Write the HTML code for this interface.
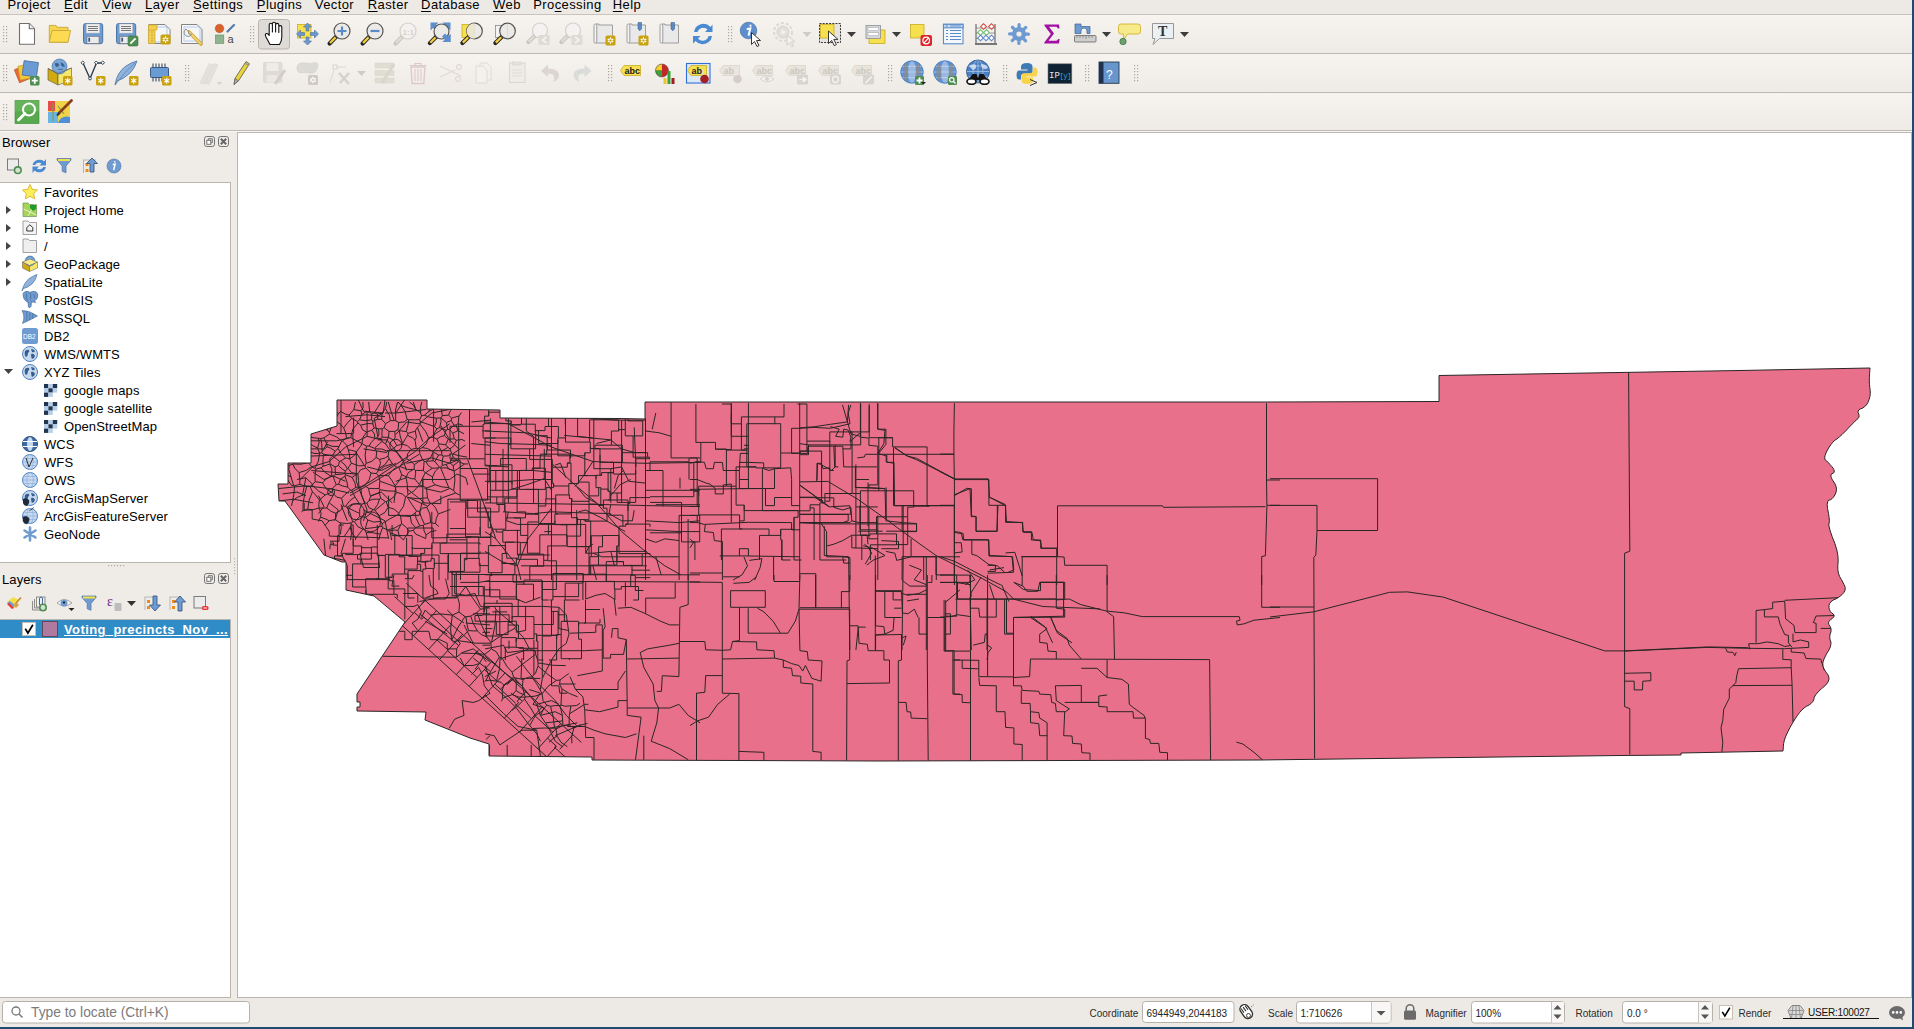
<!DOCTYPE html><html><head><meta charset="utf-8"><style>
html,body{margin:0;padding:0;width:1914px;height:1029px;overflow:hidden;background:#efebe7;position:relative;font-family:"Liberation Sans",sans-serif}
.t{position:absolute;white-space:pre;line-height:normal;font-family:"Liberation Sans",sans-serif}
svg{display:block}
</style></head><body>
<div style="position:absolute;left:0px;top:0px;width:1914px;height:14px;background:#edeae6"></div>
<div style="position:absolute;left:0px;top:14px;width:1912px;height:1px;background:#c8c3bd"></div>
<div class="t" style="left:7.5px;top:-3px;font-size:13px;color:#000;font-weight:normal;letter-spacing:0.4px">Pro<u style="text-decoration-thickness:1px;text-underline-offset:1.5px;text-decoration-skip-ink:none">j</u>ect</div>
<div class="t" style="left:64.1px;top:-3px;font-size:13px;color:#000;font-weight:normal;letter-spacing:0.4px"><u style="text-decoration-thickness:1px;text-underline-offset:1.5px;text-decoration-skip-ink:none">E</u>dit</div>
<div class="t" style="left:102.2px;top:-3px;font-size:13px;color:#000;font-weight:normal;letter-spacing:0.4px"><u style="text-decoration-thickness:1px;text-underline-offset:1.5px;text-decoration-skip-ink:none">V</u>iew</div>
<div class="t" style="left:145.1px;top:-3px;font-size:13px;color:#000;font-weight:normal;letter-spacing:0.4px"><u style="text-decoration-thickness:1px;text-underline-offset:1.5px;text-decoration-skip-ink:none">L</u>ayer</div>
<div class="t" style="left:193px;top:-3px;font-size:13px;color:#000;font-weight:normal;letter-spacing:0.4px"><u style="text-decoration-thickness:1px;text-underline-offset:1.5px;text-decoration-skip-ink:none">S</u>ettings</div>
<div class="t" style="left:256.8px;top:-3px;font-size:13px;color:#000;font-weight:normal;letter-spacing:0.4px"><u style="text-decoration-thickness:1px;text-underline-offset:1.5px;text-decoration-skip-ink:none">P</u>lugins</div>
<div class="t" style="left:314.8px;top:-3px;font-size:13px;color:#000;font-weight:normal;letter-spacing:0.4px">Vect<u style="text-decoration-thickness:1px;text-underline-offset:1.5px;text-decoration-skip-ink:none">o</u>r</div>
<div class="t" style="left:367.8px;top:-3px;font-size:13px;color:#000;font-weight:normal;letter-spacing:0.4px"><u style="text-decoration-thickness:1px;text-underline-offset:1.5px;text-decoration-skip-ink:none">R</u>aster</div>
<div class="t" style="left:421.1px;top:-3px;font-size:13px;color:#000;font-weight:normal;letter-spacing:0.4px"><u style="text-decoration-thickness:1px;text-underline-offset:1.5px;text-decoration-skip-ink:none">D</u>atabase</div>
<div class="t" style="left:493.1px;top:-3px;font-size:13px;color:#000;font-weight:normal;letter-spacing:0.4px"><u style="text-decoration-thickness:1px;text-underline-offset:1.5px;text-decoration-skip-ink:none">W</u>eb</div>
<div class="t" style="left:533.2px;top:-3px;font-size:13px;color:#000;font-weight:normal;letter-spacing:0.4px">Pro<u style="text-decoration-thickness:1px;text-underline-offset:1.5px;text-decoration-skip-ink:none">c</u>essing</div>
<div class="t" style="left:612.8px;top:-3px;font-size:13px;color:#000;font-weight:normal;letter-spacing:0.4px"><u style="text-decoration-thickness:1px;text-underline-offset:1.5px;text-decoration-skip-ink:none">H</u>elp</div>
<div style="position:absolute;left:0px;top:15px;width:1912px;height:38px;background:linear-gradient(#f7f4f0,#eeeae5)"></div>
<div style="position:absolute;left:0px;top:53px;width:1912px;height:1px;background:#bdb8b2"></div>
<div style="position:absolute;left:0px;top:54px;width:1912px;height:38px;background:linear-gradient(#f7f4f0,#eeeae5)"></div>
<div style="position:absolute;left:0px;top:92px;width:1912px;height:1px;background:#bdb8b2"></div>
<div style="position:absolute;left:0px;top:93px;width:1912px;height:37px;background:linear-gradient(#f7f4f0,#eeeae5)"></div>
<div style="position:absolute;left:0px;top:130px;width:1912px;height:1px;background:#bdb8b2"></div>
<div style="position:absolute;left:0px;top:131px;width:1912px;height:1px;background:#f9f8f6"></div>
<svg style="position:absolute;left:0;top:0" width="1914" height="135"><rect x="3" y="26" width="1.2" height="1.2" fill="#aca69f"/><rect x="6" y="26" width="1.2" height="1.2" fill="#aca69f"/><rect x="3" y="29" width="1.2" height="1.2" fill="#aca69f"/><rect x="6" y="29" width="1.2" height="1.2" fill="#aca69f"/><rect x="3" y="32" width="1.2" height="1.2" fill="#aca69f"/><rect x="6" y="32" width="1.2" height="1.2" fill="#aca69f"/><rect x="3" y="35" width="1.2" height="1.2" fill="#aca69f"/><rect x="6" y="35" width="1.2" height="1.2" fill="#aca69f"/><rect x="3" y="38" width="1.2" height="1.2" fill="#aca69f"/><rect x="6" y="38" width="1.2" height="1.2" fill="#aca69f"/><rect x="3" y="41" width="1.2" height="1.2" fill="#aca69f"/><rect x="6" y="41" width="1.2" height="1.2" fill="#aca69f"/><rect x="250" y="26" width="1.2" height="1.2" fill="#aca69f"/><rect x="253" y="26" width="1.2" height="1.2" fill="#aca69f"/><rect x="250" y="29" width="1.2" height="1.2" fill="#aca69f"/><rect x="253" y="29" width="1.2" height="1.2" fill="#aca69f"/><rect x="250" y="32" width="1.2" height="1.2" fill="#aca69f"/><rect x="253" y="32" width="1.2" height="1.2" fill="#aca69f"/><rect x="250" y="35" width="1.2" height="1.2" fill="#aca69f"/><rect x="253" y="35" width="1.2" height="1.2" fill="#aca69f"/><rect x="250" y="38" width="1.2" height="1.2" fill="#aca69f"/><rect x="253" y="38" width="1.2" height="1.2" fill="#aca69f"/><rect x="250" y="41" width="1.2" height="1.2" fill="#aca69f"/><rect x="253" y="41" width="1.2" height="1.2" fill="#aca69f"/><rect x="728" y="26" width="1.2" height="1.2" fill="#aca69f"/><rect x="731" y="26" width="1.2" height="1.2" fill="#aca69f"/><rect x="728" y="29" width="1.2" height="1.2" fill="#aca69f"/><rect x="731" y="29" width="1.2" height="1.2" fill="#aca69f"/><rect x="728" y="32" width="1.2" height="1.2" fill="#aca69f"/><rect x="731" y="32" width="1.2" height="1.2" fill="#aca69f"/><rect x="728" y="35" width="1.2" height="1.2" fill="#aca69f"/><rect x="731" y="35" width="1.2" height="1.2" fill="#aca69f"/><rect x="728" y="38" width="1.2" height="1.2" fill="#aca69f"/><rect x="731" y="38" width="1.2" height="1.2" fill="#aca69f"/><rect x="728" y="41" width="1.2" height="1.2" fill="#aca69f"/><rect x="731" y="41" width="1.2" height="1.2" fill="#aca69f"/><rect x="3" y="65" width="1.2" height="1.2" fill="#aca69f"/><rect x="6" y="65" width="1.2" height="1.2" fill="#aca69f"/><rect x="3" y="68" width="1.2" height="1.2" fill="#aca69f"/><rect x="6" y="68" width="1.2" height="1.2" fill="#aca69f"/><rect x="3" y="71" width="1.2" height="1.2" fill="#aca69f"/><rect x="6" y="71" width="1.2" height="1.2" fill="#aca69f"/><rect x="3" y="74" width="1.2" height="1.2" fill="#aca69f"/><rect x="6" y="74" width="1.2" height="1.2" fill="#aca69f"/><rect x="3" y="77" width="1.2" height="1.2" fill="#aca69f"/><rect x="6" y="77" width="1.2" height="1.2" fill="#aca69f"/><rect x="3" y="80" width="1.2" height="1.2" fill="#aca69f"/><rect x="6" y="80" width="1.2" height="1.2" fill="#aca69f"/><rect x="185" y="65" width="1.2" height="1.2" fill="#aca69f"/><rect x="188" y="65" width="1.2" height="1.2" fill="#aca69f"/><rect x="185" y="68" width="1.2" height="1.2" fill="#aca69f"/><rect x="188" y="68" width="1.2" height="1.2" fill="#aca69f"/><rect x="185" y="71" width="1.2" height="1.2" fill="#aca69f"/><rect x="188" y="71" width="1.2" height="1.2" fill="#aca69f"/><rect x="185" y="74" width="1.2" height="1.2" fill="#aca69f"/><rect x="188" y="74" width="1.2" height="1.2" fill="#aca69f"/><rect x="185" y="77" width="1.2" height="1.2" fill="#aca69f"/><rect x="188" y="77" width="1.2" height="1.2" fill="#aca69f"/><rect x="185" y="80" width="1.2" height="1.2" fill="#aca69f"/><rect x="188" y="80" width="1.2" height="1.2" fill="#aca69f"/><rect x="608" y="65" width="1.2" height="1.2" fill="#aca69f"/><rect x="611" y="65" width="1.2" height="1.2" fill="#aca69f"/><rect x="608" y="68" width="1.2" height="1.2" fill="#aca69f"/><rect x="611" y="68" width="1.2" height="1.2" fill="#aca69f"/><rect x="608" y="71" width="1.2" height="1.2" fill="#aca69f"/><rect x="611" y="71" width="1.2" height="1.2" fill="#aca69f"/><rect x="608" y="74" width="1.2" height="1.2" fill="#aca69f"/><rect x="611" y="74" width="1.2" height="1.2" fill="#aca69f"/><rect x="608" y="77" width="1.2" height="1.2" fill="#aca69f"/><rect x="611" y="77" width="1.2" height="1.2" fill="#aca69f"/><rect x="608" y="80" width="1.2" height="1.2" fill="#aca69f"/><rect x="611" y="80" width="1.2" height="1.2" fill="#aca69f"/><rect x="888" y="65" width="1.2" height="1.2" fill="#aca69f"/><rect x="891" y="65" width="1.2" height="1.2" fill="#aca69f"/><rect x="888" y="68" width="1.2" height="1.2" fill="#aca69f"/><rect x="891" y="68" width="1.2" height="1.2" fill="#aca69f"/><rect x="888" y="71" width="1.2" height="1.2" fill="#aca69f"/><rect x="891" y="71" width="1.2" height="1.2" fill="#aca69f"/><rect x="888" y="74" width="1.2" height="1.2" fill="#aca69f"/><rect x="891" y="74" width="1.2" height="1.2" fill="#aca69f"/><rect x="888" y="77" width="1.2" height="1.2" fill="#aca69f"/><rect x="891" y="77" width="1.2" height="1.2" fill="#aca69f"/><rect x="888" y="80" width="1.2" height="1.2" fill="#aca69f"/><rect x="891" y="80" width="1.2" height="1.2" fill="#aca69f"/><rect x="1003" y="65" width="1.2" height="1.2" fill="#aca69f"/><rect x="1006" y="65" width="1.2" height="1.2" fill="#aca69f"/><rect x="1003" y="68" width="1.2" height="1.2" fill="#aca69f"/><rect x="1006" y="68" width="1.2" height="1.2" fill="#aca69f"/><rect x="1003" y="71" width="1.2" height="1.2" fill="#aca69f"/><rect x="1006" y="71" width="1.2" height="1.2" fill="#aca69f"/><rect x="1003" y="74" width="1.2" height="1.2" fill="#aca69f"/><rect x="1006" y="74" width="1.2" height="1.2" fill="#aca69f"/><rect x="1003" y="77" width="1.2" height="1.2" fill="#aca69f"/><rect x="1006" y="77" width="1.2" height="1.2" fill="#aca69f"/><rect x="1003" y="80" width="1.2" height="1.2" fill="#aca69f"/><rect x="1006" y="80" width="1.2" height="1.2" fill="#aca69f"/><rect x="1085" y="65" width="1.2" height="1.2" fill="#aca69f"/><rect x="1088" y="65" width="1.2" height="1.2" fill="#aca69f"/><rect x="1085" y="68" width="1.2" height="1.2" fill="#aca69f"/><rect x="1088" y="68" width="1.2" height="1.2" fill="#aca69f"/><rect x="1085" y="71" width="1.2" height="1.2" fill="#aca69f"/><rect x="1088" y="71" width="1.2" height="1.2" fill="#aca69f"/><rect x="1085" y="74" width="1.2" height="1.2" fill="#aca69f"/><rect x="1088" y="74" width="1.2" height="1.2" fill="#aca69f"/><rect x="1085" y="77" width="1.2" height="1.2" fill="#aca69f"/><rect x="1088" y="77" width="1.2" height="1.2" fill="#aca69f"/><rect x="1085" y="80" width="1.2" height="1.2" fill="#aca69f"/><rect x="1088" y="80" width="1.2" height="1.2" fill="#aca69f"/><rect x="1134" y="65" width="1.2" height="1.2" fill="#aca69f"/><rect x="1137" y="65" width="1.2" height="1.2" fill="#aca69f"/><rect x="1134" y="68" width="1.2" height="1.2" fill="#aca69f"/><rect x="1137" y="68" width="1.2" height="1.2" fill="#aca69f"/><rect x="1134" y="71" width="1.2" height="1.2" fill="#aca69f"/><rect x="1137" y="71" width="1.2" height="1.2" fill="#aca69f"/><rect x="1134" y="74" width="1.2" height="1.2" fill="#aca69f"/><rect x="1137" y="74" width="1.2" height="1.2" fill="#aca69f"/><rect x="1134" y="77" width="1.2" height="1.2" fill="#aca69f"/><rect x="1137" y="77" width="1.2" height="1.2" fill="#aca69f"/><rect x="1134" y="80" width="1.2" height="1.2" fill="#aca69f"/><rect x="1137" y="80" width="1.2" height="1.2" fill="#aca69f"/><rect x="3" y="104" width="1.2" height="1.2" fill="#aca69f"/><rect x="6" y="104" width="1.2" height="1.2" fill="#aca69f"/><rect x="3" y="107" width="1.2" height="1.2" fill="#aca69f"/><rect x="6" y="107" width="1.2" height="1.2" fill="#aca69f"/><rect x="3" y="110" width="1.2" height="1.2" fill="#aca69f"/><rect x="6" y="110" width="1.2" height="1.2" fill="#aca69f"/><rect x="3" y="113" width="1.2" height="1.2" fill="#aca69f"/><rect x="6" y="113" width="1.2" height="1.2" fill="#aca69f"/><rect x="3" y="116" width="1.2" height="1.2" fill="#aca69f"/><rect x="6" y="116" width="1.2" height="1.2" fill="#aca69f"/><rect x="3" y="119" width="1.2" height="1.2" fill="#aca69f"/><rect x="6" y="119" width="1.2" height="1.2" fill="#aca69f"/><path d="M19.5 23.5 H29.3 L34.5 28.7 V44.2 H19.5 Z" fill="#fff" stroke="#6f6f6f" stroke-width="1.1" stroke-linejoin="round"/><path d="M29.3 23.5 V28.7 H34.5" fill="#eee" stroke="#6f6f6f" stroke-width="1.1"/><path d="M49.3 42.2 V25.4 H56 L57 27.3 H68 V42.2 Z" fill="#f6d44e" stroke="#c7a73a" stroke-width="0.9"/><path d="M49.3 42.2 L52 30.5 H70.6 L68 42.2 Z" fill="#fcda52" stroke="#c7a73a" stroke-width="0.9"/><rect x="83.5" y="23.5" width="19.2" height="20.2" rx="2.2" fill="#6f9cd0" stroke="#4d74a6" stroke-width="1"/><rect x="86.5" y="24" width="13" height="9" fill="#f0f0f0" stroke="#c9c9c9" stroke-width="0.6"/><path d="M88 26.5 h10 M88 28.5 h10 M88 30.5 h10" stroke="#555" stroke-width="0.8"/><rect x="87" y="36.5" width="12" height="6.8" fill="#ececec" stroke="#777" stroke-width="0.6"/><rect x="88.3" y="37.7" width="1.8" height="4" fill="#3a5a80"/><rect x="116.5" y="23.5" width="19.2" height="20.2" rx="2.2" fill="#6f9cd0" stroke="#4d74a6" stroke-width="1"/><rect x="119.5" y="24" width="13" height="9" fill="#f0f0f0" stroke="#c9c9c9" stroke-width="0.6"/><path d="M121 26.5 h10 M121 28.5 h10 M121 30.5 h10" stroke="#555" stroke-width="0.8"/><rect x="120" y="36.5" width="12" height="6.8" fill="#ececec" stroke="#777" stroke-width="0.6"/><rect x="121.3" y="37.7" width="1.8" height="4" fill="#3a5a80"/><rect x="128" y="36" width="10" height="10" rx="1.5" fill="#4f8d52" stroke="#3f7342" stroke-width="0.6"/><path d="M130.3 43.6 L135.6 38.3" stroke="#fff" stroke-width="1.8"/><path d="M149 24.5 H165 L170 29.5 V43.5 H149 Z" fill="#f6f6f6" stroke="#777" stroke-width="0.9"/><rect x="152" y="27" width="15" height="15" fill="none" stroke="#9ec0ec" stroke-width="0.8"/><path d="M148.5 25 H155 V43.5 H148.5 Z" fill="#f2cf4a" stroke="#c9a53a" stroke-width="0.7"/><path d="M148.5 25 H157 V30 H148.5Z" fill="#f2cf4a" stroke="#c9a53a" stroke-width="0.7"/><path d="M151 32 h2 M151 35 h2 M151 38 h2 M151 41 h2" stroke="#a8892a" stroke-width="0.6"/><rect x="160.5" y="34.5" width="10" height="10" rx="1.5" fill="#c9a20e"/><g stroke="#fff" stroke-width="1.1"><path d="M165.5 36.3 v6.4 M162.7 37.9 l5.6 3.2 M162.7 41.1 l5.6 -3.2"/></g><circle cx="165.5" cy="39.5" r="1.6" fill="#c9a20e" stroke="#fff" stroke-width="0.9"/><path d="M181.5 24.5 H197 L202 29.5 V43.5 H181.5 Z" fill="#f6f6f6" stroke="#777" stroke-width="0.9"/><rect x="184" y="27" width="16" height="14" fill="none" stroke="#a9c6ee" stroke-width="0.8"/><path d="M189 32 L201 44" stroke="#c9a53a" stroke-width="3.6" stroke-linecap="round"/><path d="M189.5 32.5 L200.5 43.5" stroke="#f0d06a" stroke-width="2.2" stroke-linecap="round"/><path d="M186 29 a4 4 0 1 0 5.5 5.5 l-2.5 -0.5 l-0.8 -2.5 l-2.2 -2.5 z" fill="#f0f0f0" stroke="#777" stroke-width="0.8"/><circle cx="219.5" cy="28.5" r="4.3" fill="#d9622b" stroke="#b04c1f" stroke-width="0.5"/><path d="M227.5 31.5 L234 25" stroke="#4f7bb0" stroke-width="2.2" stroke-linecap="round"/><rect x="215.5" y="35" width="8.3" height="8.3" fill="#8fb38f" stroke="#5e8a5e" stroke-width="0.6"/><text x="227.5" y="43" font-family="Liberation Sans" font-size="11" fill="#444">a</text><rect x="258.5" y="19.5" width="31" height="29.5" rx="3" fill="#dedad5" stroke="#b9b4ad" stroke-width="1"/><path d="M270 44.5 L266 37 Q264.5 34 266.5 33.5 Q268 33.3 269.2 35.5 V25 Q269.2 23.2 270.8 23.2 Q272.4 23.2 272.4 25 V32 V24 Q272.4 22.2 274 22.2 Q275.6 22.2 275.6 24 V32 V25 Q275.6 23.4 277.2 23.4 Q278.8 23.4 278.8 25 V32.5 V27 Q278.8 25.6 280.3 25.6 Q281.8 25.6 281.8 27 V37 Q281.8 41 279.5 44.5 Z" fill="#fff" stroke="#111" stroke-width="1.1" stroke-linejoin="round"/><rect x="297.5" y="24.5" width="13.5" height="13.5" fill="#f7e04d" stroke="#c9ad27" stroke-width="0.8"/><g fill="#6d9ad0" stroke="#44699c" stroke-width="0.6"><path d="M307.5 23 l-4 4 h2.6 v4 h2.8 v-4 h2.6 z"/><path d="M307.5 45 l-4 -4 h2.6 v-4 h2.8 v4 h2.6 z"/><path d="M296.5 34 l4 -4 v2.6 h4 v2.8 h-4 v2.6 z"/><path d="M318.5 34 l-4 -4 v2.6 h-4 v2.8 h4 v2.6 z"/></g><path d="M336.4 36.6 L329.6 43.4" stroke="#222" stroke-width="4.2" stroke-linecap="round"/><path d="M335.6 37.4 L330.0 43.0" stroke="#f2cd3c" stroke-width="2.4" stroke-linecap="butt"/><circle cx="342" cy="31" r="8" fill="#eceae6" stroke="#555" stroke-width="1.2"/><path d="M337.5 31 h9 M342 26.5 v9" stroke="#5b8bc8" stroke-width="2.2"/><path d="M369.4 36.6 L362.6 43.4" stroke="#222" stroke-width="4.2" stroke-linecap="round"/><path d="M368.6 37.4 L363.0 43.0" stroke="#f2cd3c" stroke-width="2.4" stroke-linecap="butt"/><circle cx="375" cy="31" r="8" fill="#eceae6" stroke="#555" stroke-width="1.2"/><path d="M370.5 31 h9" stroke="#5b8bc8" stroke-width="2.2"/><path d="M402.4 36.6 L395.6 43.4" stroke="#c8c4be" stroke-width="4.2" stroke-linecap="round"/><path d="M401.6 37.4 L396.0 43.0" stroke="#e0dcd6" stroke-width="2.4" stroke-linecap="butt"/><circle cx="408" cy="31" r="8" fill="#f4f2f0" stroke="#d4d0cb" stroke-width="1.2"/><text x="402.5" y="34.5" font-family="Liberation Sans" font-size="8" font-weight="bold" fill="#d6d2cd">1:1</text><g fill="#5d8fcd"><path d="M430.5 22.5 h8 l-2.5 2.5 l3 3 l-3 3 l-3 -3 l-2.5 2.5 z"/><path d="M450.5 22.5 v8 l-2.5 -2.5 l-3 3 l-3 -3 l3 -3 l-2.5 -2.5 z"/><path d="M450.5 42 h-8 l2.5 -2.5 l-3 -3 l3 -3 l3 3 l2.5 -2.5 z"/></g><path d="M436.25 36.75 L429.875 43.125" stroke="#222" stroke-width="4.2" stroke-linecap="round"/><path d="M435.5 37.5 L430.25 42.75" stroke="#f2cd3c" stroke-width="2.4" stroke-linecap="butt"/><circle cx="441.5" cy="31.5" r="7.5" fill="#eceae6" stroke="#555" stroke-width="1.2"/><path d="M450.5 42 h-8 l2.5 -2.5 l-3 -3 l3 -3 l3 3 l2.5 -2.5 z" fill="#5d8fcd"/><rect x="462" y="24.5" width="11" height="13" fill="#f7e04d" stroke="#c9ad27" stroke-width="0.8"/><path d="M469.04 36.46 L462.41 43.09" stroke="#222" stroke-width="4.2" stroke-linecap="round"/><path d="M468.26 37.24 L462.8 42.7" stroke="#f2cd3c" stroke-width="2.4" stroke-linecap="butt"/><circle cx="474.5" cy="31" r="7.8" fill="#eceae6" stroke="#555" stroke-width="1.2"/><path d="M474.5 23.5 v15" stroke="#ccc" stroke-width="0.6"/><path d="M466.7 31 a7.8 7.8 0 0 0 7.8 7.8 v-15.6 a7.8 7.8 0 0 0 -7.8 7.8z" fill="#ece6cf"/><rect x="495.5" y="25.5" width="11" height="12" fill="#f3f3f3" stroke="#8a8a8a" stroke-width="0.8"/><path d="M502.04 36.46 L495.41 43.09" stroke="#222" stroke-width="4.2" stroke-linecap="round"/><path d="M501.26 37.24 L495.8 42.7" stroke="#f2cd3c" stroke-width="2.4" stroke-linecap="butt"/><circle cx="507.5" cy="31" r="7.8" fill="#eceae6" stroke="#555" stroke-width="1.2"/><path d="M507.5 23.5 v15" stroke="#ccc" stroke-width="0.6"/><path d="M534.75 35.75 L528.375 42.125" stroke="#c8c4be" stroke-width="4.2" stroke-linecap="round"/><path d="M534.0 36.5 L528.75 41.75" stroke="#e0dcd6" stroke-width="2.4" stroke-linecap="butt"/><circle cx="540" cy="30.5" r="7.5" fill="#f4f2f0" stroke="#d4d0cb" stroke-width="1.2"/><rect x="538.5" y="35" width="11" height="10" fill="#dedad5"/><path d="M546.5 37 l-4 3 l4 3" stroke="#f5f3f0" stroke-width="1.6" fill="none"/><path d="M567.75 35.75 L561.375 42.125" stroke="#c8c4be" stroke-width="4.2" stroke-linecap="round"/><path d="M567.0 36.5 L561.75 41.75" stroke="#e0dcd6" stroke-width="2.4" stroke-linecap="butt"/><circle cx="573" cy="30.5" r="7.5" fill="#f4f2f0" stroke="#d4d0cb" stroke-width="1.2"/><rect x="571.5" y="35" width="11" height="10" fill="#dedad5"/><path d="M575 37 l4 3 l-4 3" stroke="#f5f3f0" stroke-width="1.6" fill="none"/><path d="M596 24 h3 v1 h13.5 v18 h-16.5 z" fill="#e9e9e9" stroke="#8c8c8c" stroke-width="0.8"/><rect x="594" y="24" width="2.8" height="19" rx="1.4" fill="#f4f4f4" stroke="#8c8c8c" stroke-width="0.8"/><rect x="605.5" y="35.5" width="10" height="10" rx="1.5" fill="#c9a20e"/><g stroke="#fff" stroke-width="1.1"><path d="M610.5 37.3 v6.4 M607.7 38.9 l5.6 3.2 M607.7 42.1 l5.6 -3.2"/></g><circle cx="610.5" cy="40.5" r="1.6" fill="#c9a20e" stroke="#fff" stroke-width="0.9"/><path d="M629 24 h3 v1 h13.5 v18 h-16.5 z" fill="#e9e9e9" stroke="#8c8c8c" stroke-width="0.8"/><rect x="627" y="24" width="2.8" height="19" rx="1.4" fill="#f4f4f4" stroke="#8c8c8c" stroke-width="0.8"/><path d="M638 22.5 h3.5 v6.5 l-1.75 1.8 l-1.75 -1.8 z" fill="#5a8ac6" stroke="#34577f" stroke-width="0.5"/><rect x="638.5" y="35.5" width="10" height="10" rx="1.5" fill="#c9a20e"/><g stroke="#fff" stroke-width="1.1"><path d="M643.5 37.3 v6.4 M640.7 38.9 l5.6 3.2 M640.7 42.1 l5.6 -3.2"/></g><circle cx="643.5" cy="40.5" r="1.6" fill="#c9a20e" stroke="#fff" stroke-width="0.9"/><path d="M662 24 h3 v1 h13.5 v18 h-16.5 z" fill="#e9e9e9" stroke="#8c8c8c" stroke-width="0.8"/><rect x="660" y="24" width="2.8" height="19" rx="1.4" fill="#f4f4f4" stroke="#8c8c8c" stroke-width="0.8"/><path d="M671 22.5 h3.5 v6.5 l-1.75 1.8 l-1.75 -1.8 z" fill="#5a8ac6" stroke="#34577f" stroke-width="0.5"/><path d="M694 32 A9.5 9.5 0 0 1 710.5 27 L712.5 24.5 V32 H705 L707.5 29.5 A6 6 0 0 0 697.5 32 Z" fill="#4a8ad2"/><path d="M712 36 A9.5 9.5 0 0 1 695.5 41 L693 43.5 V36 H700.5 L698 38.5 A6 6 0 0 0 708.5 36 Z" fill="#4a8ad2"/><circle cx="748.5" cy="30.5" r="8.3" fill="#5e8fcc" stroke="#4672a8" stroke-width="0.7"/><path d="M747.5 29 l2.8 -0.6 l-1.6 6.5 M750.5 25.5 v0.3" stroke="#fff" stroke-width="2" stroke-linecap="round" fill="none"/><path d="M751.5 32.5 l0.0 12.0 l3.0 -3.0 l2.5 5.0 l2.0 -1.0 l-2.5 -5.0 l4.0 0 z" fill="#fff" stroke="#222" stroke-width="0.9" stroke-linejoin="round"/><circle cx="783" cy="32" r="9" fill="none" stroke="#dcd8d3" stroke-width="2" stroke-dasharray="3 2"/><circle cx="783" cy="32" r="6" fill="#e2dfdb" stroke="#d6d2cd"/><path d="M781.5 29 v6 l4.5 -3 z" fill="#f4f2ef"/><path d="M787 35 l0.0 10.2 l2.55 -2.55 l2.125 4.25 l1.7 -0.85 l-2.125 -4.25 l3.4 0 z" fill="#f4f2f0" stroke="#cfcbc6" stroke-width="0.9" stroke-linejoin="round"/><path d="M802.5 32 h9 l-4.5 5 z" fill="#cfcbc5"/><rect x="819.5" y="23.5" width="21" height="19" fill="#e6e4e1" stroke="#222" stroke-width="0.9" stroke-dasharray="2 1.2"/><rect x="820.5" y="24.5" width="13.5" height="13.5" fill="#f7e04d" stroke="#c9ad27" stroke-width="0.8"/><path d="M828.5 31 l0.0 12.600000000000001 l3.1500000000000004 -3.1500000000000004 l2.625 5.25 l2.1 -1.05 l-2.625 -5.25 l4.2 0 z" fill="#fff" stroke="#222" stroke-width="0.9" stroke-linejoin="round"/><path d="M847 32 h9 l-4.5 5 z" fill="#3c3c3c"/><rect x="869" y="30" width="16" height="13.5" fill="#f7e04d" stroke="#c9ad27" stroke-width="0.8"/><rect x="866" y="25.5" width="14.5" height="13" fill="#d4d8dc" stroke="#8b8f93" stroke-width="0.8"/><rect x="868" y="27.5" width="10.5" height="3.2" fill="#fff" stroke="#999" stroke-width="0.5"/><rect x="868" y="32.5" width="10.5" height="3.2" fill="#fff" stroke="#999" stroke-width="0.5"/><path d="M892 32 h9 l-4.5 5 z" fill="#3c3c3c"/><rect x="910.5" y="24.5" width="13.5" height="13.5" fill="#f7e04d" stroke="#c9ad27" stroke-width="0.8"/><rect x="920.5" y="35" width="11.5" height="11" rx="2" fill="#d8262c"/><circle cx="926.2" cy="40.5" r="3.3" fill="none" stroke="#fff" stroke-width="1.2"/><path d="M924 42.8 l4.5 -4.6" stroke="#fff" stroke-width="1.2"/><rect x="943.5" y="24.3" width="19.5" height="19.5" fill="#f4f8fc" stroke="#5b8ac8" stroke-width="1.1"/><rect x="943.5" y="24.3" width="19.5" height="3.5" fill="#cfe0f4" stroke="#5b8ac8" stroke-width="1.1"/><path d="M945.5 26 h2.5 M950 26 h11 M946 30.5 h2 M950 30.5 h11 M946 33.5 h2 M950 33.5 h11 M946 36.5 h2 M950 36.5 h11 M946 39.5 h2 M950 39.5 h11" stroke="#5b8ac8" stroke-width="1"/><path d="M976 24 V44 M995 24 V44" stroke="#555" stroke-width="1"/><rect x="975" y="43" width="22" height="2" fill="#777"/><path d="M976 28 h19 M976 33 h19 M976 38.5 h19" stroke="#666" stroke-width="0.6"/><rect x="981.5" y="24.5" width="4" height="4" transform="rotate(45 983.5 26.5)" fill="#fff" stroke="#d9433a" stroke-width="1"/><rect x="989.5" y="24.5" width="4" height="4" transform="rotate(45 991.5 26.5)" fill="#fff" stroke="#d9433a" stroke-width="1"/><rect x="978.5" y="30.5" width="4" height="4" transform="rotate(45 980.5 32.5)" fill="#fff" stroke="#6bbf6a" stroke-width="1"/><rect x="984.5" y="30.5" width="4" height="4" transform="rotate(45 986.5 32.5)" fill="#fff" stroke="#6bbf6a" stroke-width="1"/><rect x="978.5" y="36" width="4" height="4" transform="rotate(45 980.5 38)" fill="#fff" stroke="#5b8ac8" stroke-width="1"/><rect x="984" y="36" width="4" height="4" transform="rotate(45 986 38)" fill="#fff" stroke="#5b8ac8" stroke-width="1"/><rect x="989.5" y="36" width="4" height="4" transform="rotate(45 991.5 38)" fill="#fff" stroke="#5b8ac8" stroke-width="1"/><rect x="1017.5" y="23" width="3.2" height="6" rx="1.5" fill="#6e9ad2" transform="rotate(0 1019 34)"/><rect x="1017.5" y="23" width="3.2" height="6" rx="1.5" fill="#6e9ad2" transform="rotate(45 1019 34)"/><rect x="1017.5" y="23" width="3.2" height="6" rx="1.5" fill="#6e9ad2" transform="rotate(90 1019 34)"/><rect x="1017.5" y="23" width="3.2" height="6" rx="1.5" fill="#6e9ad2" transform="rotate(135 1019 34)"/><rect x="1017.5" y="23" width="3.2" height="6" rx="1.5" fill="#6e9ad2" transform="rotate(180 1019 34)"/><rect x="1017.5" y="23" width="3.2" height="6" rx="1.5" fill="#6e9ad2" transform="rotate(225 1019 34)"/><rect x="1017.5" y="23" width="3.2" height="6" rx="1.5" fill="#6e9ad2" transform="rotate(270 1019 34)"/><rect x="1017.5" y="23" width="3.2" height="6" rx="1.5" fill="#6e9ad2" transform="rotate(315 1019 34)"/><circle cx="1019" cy="34" r="7" fill="#6e9ad2"/><circle cx="1019" cy="34" r="2.6" fill="#f1eee9"/><path d="M1044.5 24.5 H1059 L1059.5 28.5 L1058 28.5 L1056.5 26.8 H1049 L1054 33.5 L1048.5 40.8 H1056.5 L1058.3 39 H1059.6 L1059 43.5 H1044.3 V42.5 L1050.8 34 L1044.5 25.8 Z" fill="#a10fa3"/><path d="M1075 24 h6 v2.5 h9 v7 h-3 v-2.5 q0 -3 -3 -3 q-3 0 -3 3 v2.5 h-6 z" fill="#6e9ad2" stroke="#3d6394" stroke-width="0.7"/><rect x="1074.5" y="35.5" width="21.5" height="6.5" rx="1" fill="#cfcfcf" stroke="#666" stroke-width="0.8"/><path d="M1077 35.5 v2.5 M1080 35.5 v2.5 M1083 35.5 v2.5 M1086 35.5 v3.5 M1089 35.5 v2.5 M1092 35.5 v2.5" stroke="#666" stroke-width="0.6"/><path d="M1102 32 h9 l-4.5 5 z" fill="#3c3c3c"/><path d="M1121 24 h17 a2.5 2.5 0 0 1 2.5 2.5 v5 a2.5 2.5 0 0 1 -2.5 2.5 h-10.5 l-4 6 v-6 h-2.5 a2.5 2.5 0 0 1 -2.5 -2.5 v-5 a2.5 2.5 0 0 1 2.5 -2.5 z" fill="#f7ea8a" stroke="#d3b22f" stroke-width="0.9"/><circle cx="1123" cy="41.5" r="3.2" fill="#6ca26d" stroke="#3c6e3d" stroke-width="0.7"/><path d="M1152.5 23.5 h21 v15 h-14 l-6.5 6 l2 -6 h-2.5 z" fill="#eaf0f4" stroke="#8c8c8c" stroke-width="0.9"/><text x="1158" y="36" font-family="Liberation Serif" font-size="14" font-weight="bold" fill="#333">T</text><path d="M1180 32 h9 l-4.5 5 z" fill="#3c3c3c"/><rect x="16.5" y="67" width="12" height="14" transform="rotate(-22 22.5 74)" fill="#e76b35" stroke="#b24e22" stroke-width="0.6"/><rect x="19" y="65" width="12.5" height="14" transform="rotate(-10 25 72)" fill="#f3c83c" stroke="#c29a23" stroke-width="0.6"/><rect x="23" y="61.5" width="14.5" height="14.5" transform="rotate(8 30 69)" fill="#6a9bd3" stroke="#40679a" stroke-width="0.7"/><rect x="30" y="76" width="9.5" height="9.5" rx="1.5" fill="#4f8d52"/><path d="M34.75 77.7 v6 M31.75 80.7 h6" stroke="#fff" stroke-width="1.8"/><path d="M48 68.5 L58 73.5 V85 L48 80 Z" fill="#d0aa0f" stroke="#555" stroke-width="0.6"/><path d="M58 73.5 L71.5 68 V80 L58 85 Z" fill="#f6e76a" stroke="#555" stroke-width="0.6"/><circle cx="59.5" cy="66.5" r="7.5" fill="#7aa7d8" stroke="#40679a" stroke-width="0.6"/><path d="M55 63.5 q3 -1 4 1 q-1 3 -3 2 z M61 62.5 q3 1 3.5 4 q-2 0 -3 -1 z M58 69 q3 1 5 0" fill="#3d5f8e" stroke="#3d5f8e" stroke-width="0.6"/><path d="M48 68.5 L58 73.5 L71.5 68" fill="none" stroke="#555" stroke-width="0.6"/><rect x="63" y="76" width="9.5" height="9.5" rx="1.5" fill="#caa10f"/><g stroke="#fff" stroke-width="1.1"><path d="M67.75 77.8 v6 M65.2 79.3 l5.1 3 M65.2 82.3 l5.1 -3"/></g><path d="M83 63 L90 78.5 L96.5 63 H103.5" fill="none" stroke="#283a4f" stroke-width="1.3"/><g fill="#fff" stroke="#283a4f" stroke-width="0.9"><rect x="81.5" y="61.5" width="2.5" height="2.5" transform="rotate(45 82.75 62.75)"/><rect x="95" y="61.5" width="2.5" height="2.5" transform="rotate(45 96.25 62.75)"/><rect x="101.5" y="61.5" width="2.5" height="2.5" transform="rotate(45 102.75 62.75)"/><circle cx="90" cy="78.5" r="1.4"/></g><rect x="96" y="76" width="9.5" height="9.5" rx="1.5" fill="#caa10f"/><g stroke="#fff" stroke-width="1.1"><path d="M100.75 77.8 v6 M98.2 79.3 l5.1 3 M98.2 82.3 l5.1 -3"/></g><path d="M115 85 Q117 72 126 66 Q132 62 137 61 Q135 68 130 73 Q124 79 117 81 Z" fill="#8fb3dc" stroke="#4d73a2" stroke-width="0.8"/><path d="M116 84 Q124 72 135 63" stroke="#4d73a2" stroke-width="0.6" fill="none"/><rect x="129" y="76" width="9.5" height="9.5" rx="1.5" fill="#caa10f"/><g stroke="#fff" stroke-width="1.1"><path d="M133.75 77.8 v6 M131.2 79.3 l5.1 3 M131.2 82.3 l5.1 -3"/></g><path d="M153 63.5 v4 M156 63.5 v4 M159 63.5 v4 M162 63.5 v4 M165 63.5 v4 M153 77 v4.5 M156 77 v4.5 M159 77 v4.5 M162 77 v4.5" stroke="#283a4f" stroke-width="1"/><rect x="150.5" y="67.5" width="18" height="10" rx="1" fill="#6a9bd3" stroke="#2f4f7a" stroke-width="0.9"/><rect x="162" y="76" width="9.5" height="9.5" rx="1.5" fill="#caa10f"/><g stroke="#fff" stroke-width="1.1"><path d="M166.75 77.8 v6 M164.2 79.3 l5.1 3 M164.2 82.3 l5.1 -3"/></g><path d="M200 83 L209 63.5 L213 65 L204 84.5 Z M205 83 L214 63.5 L218 65 L209 84.5 Z" fill="#e4e0dc" stroke="#dcd8d3" stroke-width="0.6"/><path d="M217 82 h5 l-2.5 3 z" fill="#d3cfca"/><path d="M234 84.5 L235 78.5 L246 61.5 L249.5 63.8 L238.5 80.8 Z" fill="#e9d43a" stroke="#555" stroke-width="0.8"/><path d="M234 84.5 L235 78.5 L238.5 80.8 Z" fill="#aaa" stroke="#555" stroke-width="0.6"/><path d="M245 63 L248.5 65.3" stroke="#999" stroke-width="1.6"/><rect x="263" y="62" width="19.5" height="21" rx="2" fill="#dedad5"/><rect x="266.5" y="63" width="12" height="8" fill="#efece8"/><rect x="266.5" y="75" width="11" height="7.5" fill="#ebe8e4"/><path d="M275 84 L285 70" stroke="#d2cdc7" stroke-width="3"/><path d="M297 67 Q298 62 305 63 Q312 64 316 62.5 Q319 64 317 69 Q315 74 310 73 Q305 72 300 73 Q296 71 297 67 Z" fill="#dcdad4" stroke="#d2cfca" stroke-width="0.6"/><rect x="308" y="75" width="10" height="10" rx="1.5" fill="#cfcac3"/><g stroke="#fff" stroke-width="1.1"><path d="M313 76.8 v6.4 M310.2 78.4 l5.6 3.2 M310.2 81.6 l5.6 -3.2"/></g><circle cx="313" cy="80" r="1.6" fill="#cfcac3" stroke="#fff" stroke-width="0.9"/><rect x="333" y="65" width="4" height="4" fill="none" stroke="#cfcbc5" stroke-width="0.8"/><path d="M337 67 h9 M334 70 L330 83" stroke="#d6d2cd" stroke-width="0.8"/><path d="M339 73 L349 84 M349 73 L340 83" stroke="#d5d1cb" stroke-width="2.5"/><path d="M357 71 h9 l-4.5 5 z" fill="#cfcbc5"/><rect x="375" y="63" width="19" height="5" fill="#e0ddd2" stroke="#d6d3ca" stroke-width="0.5"/><rect x="375" y="70.5" width="19" height="5" fill="#e0ddd2" stroke="#d6d3ca" stroke-width="0.5"/><rect x="375" y="78" width="19" height="5" fill="#e0ddd2" stroke="#d6d3ca" stroke-width="0.5"/><path d="M382 83 L394 64" stroke="#d9d5cf" stroke-width="3"/><path d="M409.5 65.5 h17 M415 65.5 v-2 h6 v2" stroke="#ddc9c9" stroke-width="1.2" fill="none"/><path d="M411 67 h14 l-1.2 16.5 h-11.6 z" fill="none" stroke="#ddc9c9" stroke-width="1.4"/><path d="M415 69 v12 M418 69 v12 M421 69 v12" stroke="#ddc9c9" stroke-width="1.1"/><path d="M440 66 L461 76 M440 77 L455 70" stroke="#ddd9d3" stroke-width="1.2"/><circle cx="458" cy="79" r="2.5" fill="none" stroke="#e0cfd0" stroke-width="1"/><circle cx="459" cy="67" r="2.5" fill="none" stroke="#e0cfd0" stroke-width="1"/><path d="M480 63 h7 l4 4 v13 h-11 z" fill="#f3f1ee" stroke="#dcd8d2" stroke-width="0.9"/><path d="M476 66 h7 l4 4 v13 h-11 z" fill="#f3f1ee" stroke="#dcd8d2" stroke-width="0.9"/><rect x="509.5" y="63" width="15.5" height="19.5" fill="#efece8" stroke="#d9d5cf" stroke-width="1"/><rect x="512.5" y="62" width="9" height="3" fill="#e5e1dc" stroke="#d9d5cf" stroke-width="0.7"/><path d="M512 70 h10 M512 73 h10 M512 76 h10" stroke="#dcd8d2" stroke-width="0.8"/><path d="M548 64.5 L541 71 L548 77 V73.5 Q553 73.5 554 76 Q555 79 553 82 Q559 80 559 75 Q558.5 68.5 548 68.5 Z" fill="#ddd5cf"/><path d="M584.5 64.5 L591.5 71 L584.5 77 V73.5 Q579.5 73.5 578.5 76 Q577.5 79 579.5 82 Q573.5 80 573.5 75 Q574 68.5 584.5 68.5 Z" fill="#d9dcd8"/><path d="M620.5 70.5 L624 65.5 H640.5 V75.5 H624 Z" fill="#f7e04d" stroke="#c9ad27" stroke-width="0.8"/><text x="624.5" y="74" font-family="Liberation Sans" font-size="9" font-weight="bold" fill="#222">abc</text><circle cx="662" cy="70.5" r="6.5" fill="#c22727"/><path d="M662 70.5 V64 A6.5 6.5 0 0 0 655.5 70.5 Z" fill="#f2d12f"/><path d="M662 70.5 H655.5 A6.5 6.5 0 0 0 662 77 Z" fill="#3aa23a"/><circle cx="662" cy="70.5" r="6.5" fill="none" stroke="#444" stroke-width="0.5"/><rect x="663.5" y="78" width="3" height="6" fill="#f2c12f"/><rect x="667.5" y="71" width="3" height="13" fill="#3aa23a"/><rect x="671.5" y="78" width="3" height="6" fill="#a11c1c"/><rect x="686.5" y="63.5" width="23.5" height="19.5" fill="#dde8f5" stroke="#2e6fd8" stroke-width="1.1"/><path d="M687.5 70.5 L691 65.5 H706.5 V75.5 H691 Z" fill="#f7e04d" stroke="#c9ad27" stroke-width="0.8"/><text x="691.5" y="74" font-family="Liberation Sans" font-size="9" font-weight="bold" fill="#222">ab</text><path d="M703 69 v8" stroke="#ddd" stroke-width="1.5"/><circle cx="704.5" cy="79" r="4.3" fill="#a51f27"/><path d="M719.5 70.5 L723 65.5 H739.5 V75.5 H723 Z" fill="#e8e5dd" stroke="#d9d5ca" stroke-width="0.8"/><text x="723.5" y="74" font-family="Liberation Sans" font-size="9" font-weight="bold" fill="#cbc7bf">ab</text><path d="M752.5 70.5 L756 65.5 H772.5 V75.5 H756 Z" fill="#e8e5dd" stroke="#d9d5ca" stroke-width="0.8"/><text x="756.5" y="74" font-family="Liberation Sans" font-size="9" font-weight="bold" fill="#cbc7bf">abc</text><path d="M785.5 70.5 L789 65.5 H805.5 V75.5 H789 Z" fill="#e8e5dd" stroke="#d9d5ca" stroke-width="0.8"/><text x="789.5" y="74" font-family="Liberation Sans" font-size="9" font-weight="bold" fill="#cbc7bf">abc</text><path d="M818.5 70.5 L822 65.5 H838.5 V75.5 H822 Z" fill="#e8e5dd" stroke="#d9d5ca" stroke-width="0.8"/><text x="822.5" y="74" font-family="Liberation Sans" font-size="9" font-weight="bold" fill="#cbc7bf">abc</text><path d="M851.5 70.5 L855 65.5 H871.5 V75.5 H855 Z" fill="#e8e5dd" stroke="#d9d5ca" stroke-width="0.8"/><text x="855.5" y="74" font-family="Liberation Sans" font-size="9" font-weight="bold" fill="#cbc7bf">abc</text><circle cx="737.5" cy="79" r="4.3" fill="#d6ccca"/><path d="M736 69 v7" stroke="#ece9e5" stroke-width="1.5"/><path d="M760 79 Q767 73 774 79 Q767 85 760 79 Z" fill="#f2f0ed" stroke="#d6d2cc" stroke-width="0.9"/><circle cx="767" cy="79" r="2" fill="#d6d2cc"/><rect x="797" y="74.5" width="11" height="10" rx="1.5" fill="#d7d3ce"/><rect x="830" y="74.5" width="11" height="10" rx="1.5" fill="#d7d3ce"/><rect x="863" y="74.5" width="11" height="10" rx="1.5" fill="#d7d3ce"/><path d="M799 79.5 h4 v-2.5 l4 2.5 l-4 2.5 v-2.5" fill="#f4f2f0" stroke="#f4f2f0" stroke-width="1"/><circle cx="835.5" cy="79.5" r="3" fill="none" stroke="#f4f2f0" stroke-width="1.3"/><path d="M865.5 83 L872 76.5" stroke="#f4f2f0" stroke-width="1.6"/><circle cx="912" cy="72" r="11.3" fill="#5a93dc"/><ellipse cx="912" cy="72" rx="3.955" ry="11.3" fill="#9ab8e0"/><path d="M900.7 72 h22.6 M902.395 66.35 h19.21 M902.395 77.65 h19.21" stroke="#c9d9ef" stroke-width="0.8"/><ellipse cx="905.785" cy="72" rx="2.486" ry="9.605" fill="#8a8a8a" opacity="0.75"/><ellipse cx="918.215" cy="72" rx="2.486" ry="9.605" fill="#8a8a8a" opacity="0.75"/><circle cx="912" cy="72" r="11.3" fill="none" stroke="#4a7fc4" stroke-width="0.8"/><rect x="915" y="76" width="9" height="9" rx="1.2" fill="#4f8d52"/><path d="M919.5 77.5 v6 M916.5 80.5 h6" stroke="#fff" stroke-width="1.8"/><path d="M921 82 h5 l-2.5 2.5z" fill="#222"/><circle cx="945" cy="72" r="11.3" fill="#5a93dc"/><ellipse cx="945" cy="72" rx="3.955" ry="11.3" fill="#9ab8e0"/><path d="M933.7 72 h22.6 M935.395 66.35 h19.21 M935.395 77.65 h19.21" stroke="#c9d9ef" stroke-width="0.8"/><ellipse cx="938.785" cy="72" rx="2.486" ry="9.605" fill="#8a8a8a" opacity="0.75"/><ellipse cx="951.215" cy="72" rx="2.486" ry="9.605" fill="#8a8a8a" opacity="0.75"/><circle cx="945" cy="72" r="11.3" fill="none" stroke="#4a7fc4" stroke-width="0.8"/><rect x="948" y="76" width="9" height="9" rx="1.2" fill="#4f8d52"/><circle cx="951.8" cy="79.8" r="2.2" fill="none" stroke="#fff" stroke-width="1.1"/><path d="M953.5 81.5 l2 2" stroke="#fff" stroke-width="1.3"/><circle cx="978" cy="71.5" r="11.5" fill="#4b7fc0"/><ellipse cx="978" cy="71.5" rx="5" ry="11.5" fill="none" stroke="#a9c3e6" stroke-width="0.8"/><path d="M966.5 71.5 h23 M968 66 h20 M968 77 h20 M978 60 v23" stroke="#a9c3e6" stroke-width="0.8"/><path d="M969 66 q4 -3 7 -1 q1 4 -3 5 z M981 64 q5 0 7 4 q-3 2 -6 0 z" fill="#dfe9f6" opacity="0.8"/><circle cx="978" cy="71.5" r="11.5" fill="none" stroke="#2f5a90" stroke-width="0.8"/><path d="M968.5 80 L972.5 74 H976.5 L978 78 L979.5 74 H983.5 L987.5 80 Z" fill="#111"/><ellipse cx="971.5" cy="81.5" rx="4.5" ry="2.8" fill="#fff" stroke="#111" stroke-width="1.6"/><ellipse cx="984.5" cy="81.5" rx="4.5" ry="2.8" fill="#fff" stroke="#111" stroke-width="1.6"/><path d="M1027 63 Q1021 63 1021 66.5 V69.5 H1027.5 V70.5 H1019 Q1016.5 70.5 1016.5 75 Q1016.5 79.5 1019 79.5 H1021 V76.5 Q1021 73.8 1024 73.8 H1030 Q1032.5 73.8 1032.5 71.5 V66.5 Q1032.5 63 1027 63 Z" fill="#3f7ab5"/><path d="M1027 84 Q1033 84 1033 80.5 V77.5 H1026.5 V76.5 H1035 Q1037.5 76.5 1037.5 72 Q1037.5 67.5 1035 67.5 H1033 V70.5 Q1033 73.2 1030 73.2 H1024 Q1021.5 73.2 1021.5 75.5 V80.5 Q1021.5 84 1027 84 Z" fill="#f7d44a"/><path d="M1030 79.5 l7 3 l-7 3" stroke="#333" stroke-width="1" fill="none"/><rect x="1048" y="63.8" width="23.8" height="19.8" fill="#0e2233" stroke="#777" stroke-width="0.6"/><text x="1049" y="77.5" font-family="Liberation Mono" font-size="9" fill="#e7e7e7">IP</text><text x="1059.5" y="77.5" font-family="Liberation Mono" font-size="7.5" fill="#3aa5d8" letter-spacing="-0.8">[y]</text><rect x="1099" y="62" width="20" height="21.3" fill="#6796cc" stroke="#283a4f" stroke-width="0.9"/><rect x="1099" y="62" width="4.5" height="21.3" fill="#1f3350"/><text x="1106" y="78.5" font-family="Liberation Sans" font-size="12" fill="#fff">?</text><rect x="15" y="100.3" width="24" height="23.3" fill="#58a94e" stroke="#3e8a37" stroke-width="0.6"/><rect x="15" y="100.3" width="24" height="11" fill="#70bb66" opacity="0.6"/><circle cx="29" cy="109.5" r="6" fill="none" stroke="#fff" stroke-width="2"/><path d="M25 113.5 L18.5 120" stroke="#fff" stroke-width="2.8" stroke-linecap="round"/><rect x="48" y="101" width="22" height="22" fill="#f0d347"/><path d="M48 101 h7 v10 h-7z" fill="#e84b4b"/><path d="M48 112 h10 v11 h-10z" fill="#6bb3e5"/><path d="M58 123 q3 -8 12 -6 v6z" fill="#4d90d8"/><path d="M53 103 v18 M58 106 l6 8" stroke="#7a9d4d" stroke-width="1.2"/><path d="M59 113 L71.5 100.5" stroke="#8b3e1a" stroke-width="2.8" stroke-linecap="round"/><path d="M57 115.5 L59.5 113" stroke="#333" stroke-width="2"/></svg>
<div style="position:absolute;left:1912px;top:0px;width:2px;height:1029px;background:#1f4b70"></div>
<div style="position:absolute;left:0px;top:1027px;width:1914px;height:2px;background:#1f4b70"></div>
<div class="t" style="left:2px;top:134.5px;font-size:13px;color:#000;font-weight:normal;letter-spacing:0.1px">Browser</div>
<div class="t" style="left:2px;top:571.5px;font-size:13px;color:#000;font-weight:normal;letter-spacing:0.1px">Layers</div>
<div style="position:absolute;left:0px;top:182px;width:231px;height:381px;background:#fff;border-top:1px solid #bab5ae;border-right:1px solid #bab5ae;border-bottom:1px solid #bab5ae;box-sizing:border-box"></div>
<div class="t" style="left:44px;top:185px;font-size:13px;color:#000;font-weight:normal;letter-spacing:0.1px">Favorites</div>
<div class="t" style="left:44px;top:203px;font-size:13px;color:#000;font-weight:normal;letter-spacing:0.1px">Project Home</div>
<div class="t" style="left:44px;top:221px;font-size:13px;color:#000;font-weight:normal;letter-spacing:0.1px">Home</div>
<div class="t" style="left:44px;top:239px;font-size:13px;color:#000;font-weight:normal;letter-spacing:0.1px">/</div>
<div class="t" style="left:44px;top:257px;font-size:13px;color:#000;font-weight:normal;letter-spacing:0.1px">GeoPackage</div>
<div class="t" style="left:44px;top:275px;font-size:13px;color:#000;font-weight:normal;letter-spacing:0.1px">SpatiaLite</div>
<div class="t" style="left:44px;top:293px;font-size:13px;color:#000;font-weight:normal;letter-spacing:0.1px">PostGIS</div>
<div class="t" style="left:44px;top:311px;font-size:13px;color:#000;font-weight:normal;letter-spacing:0.1px">MSSQL</div>
<div class="t" style="left:44px;top:329px;font-size:13px;color:#000;font-weight:normal;letter-spacing:0.1px">DB2</div>
<div class="t" style="left:44px;top:347px;font-size:13px;color:#000;font-weight:normal;letter-spacing:0.1px">WMS/WMTS</div>
<div class="t" style="left:44px;top:365px;font-size:13px;color:#000;font-weight:normal;letter-spacing:0.1px">XYZ Tiles</div>
<div class="t" style="left:64px;top:383px;font-size:13px;color:#000;font-weight:normal;letter-spacing:0.1px">google maps</div>
<div class="t" style="left:64px;top:401px;font-size:13px;color:#000;font-weight:normal;letter-spacing:0.1px">google satellite</div>
<div class="t" style="left:64px;top:419px;font-size:13px;color:#000;font-weight:normal;letter-spacing:0.1px">OpenStreetMap</div>
<div class="t" style="left:44px;top:437px;font-size:13px;color:#000;font-weight:normal;letter-spacing:0.1px">WCS</div>
<div class="t" style="left:44px;top:455px;font-size:13px;color:#000;font-weight:normal;letter-spacing:0.1px">WFS</div>
<div class="t" style="left:44px;top:473px;font-size:13px;color:#000;font-weight:normal;letter-spacing:0.1px">OWS</div>
<div class="t" style="left:44px;top:491px;font-size:13px;color:#000;font-weight:normal;letter-spacing:0.1px">ArcGisMapServer</div>
<div class="t" style="left:44px;top:509px;font-size:13px;color:#000;font-weight:normal;letter-spacing:0.1px">ArcGisFeatureServer</div>
<div class="t" style="left:44px;top:527px;font-size:13px;color:#000;font-weight:normal;letter-spacing:0.1px">GeoNode</div>
<div style="position:absolute;left:0px;top:619px;width:231px;height:379px;background:#fff;border-top:1px solid #bab5ae;border-right:1px solid #bab5ae;border-bottom:1px solid #bab5ae;box-sizing:border-box"></div>
<div style="position:absolute;left:0px;top:620px;width:230px;height:18px;background:#308cc6"></div>
<div class="t" style="left:64px;top:622px;font-size:13px;color:#fff;font-weight:bold;text-decoration:underline;letter-spacing:0.4px">Voting_precincts_Nov_...</div>
<div style="position:absolute;left:237px;top:132px;width:1675px;height:866px;background:#fff;border:1px solid #bab5ae;box-sizing:border-box"></div>
<svg style="position:absolute;left:0;top:130" width="240" height="520" viewBox="0 130 240 520"><rect x="204.5" y="136.5" width="10" height="10" rx="2.2" fill="none" stroke="#747474" stroke-width="1"/><rect x="206.8" y="140.3" width="4" height="4" fill="#fff" stroke="#747474" stroke-width="1"/><path d="M208.3 140 v-1.3 h4 v4 h-1.3" fill="none" stroke="#747474" stroke-width="1"/><rect x="218.5" y="136.5" width="10" height="10" rx="2.2" fill="none" stroke="#747474" stroke-width="1"/><path d="M220.8 138.8 l5.4 5.4 M226.2 138.8 l-5.4 5.4" stroke="#666" stroke-width="2"/><rect x="204.5" y="573.5" width="10" height="10" rx="2.2" fill="none" stroke="#747474" stroke-width="1"/><rect x="206.8" y="577.3" width="4" height="4" fill="#fff" stroke="#747474" stroke-width="1"/><path d="M208.3 577 v-1.3 h4 v4 h-1.3" fill="none" stroke="#747474" stroke-width="1"/><rect x="218.5" y="573.5" width="10" height="10" rx="2.2" fill="none" stroke="#747474" stroke-width="1"/><path d="M220.8 575.8 l5.4 5.4 M226.2 575.8 l-5.4 5.4" stroke="#666" stroke-width="2"/><rect x="7.5" y="159" width="11" height="11" fill="#ececec" stroke="#7b7b7b" stroke-width="1"/><circle cx="17.8" cy="170.2" r="3.3" fill="#cfe3cf" stroke="#4f8d52" stroke-width="1.6"/><path d="M32.5 165 A7 7 0 0 1 44 161.5 L46 159 V165.5 H39.5 L41.5 163.5 A4.3 4.3 0 0 0 35.2 165 Z" fill="#4a8ad2"/><path d="M46 167 A7 7 0 0 1 34.5 170.5 L32.5 173 V166.5 H39 L37 168.5 A4.3 4.3 0 0 0 43.3 167 Z" fill="#4a8ad2"/><path d="M57 158.5 h14 v1.5 l-5 6 v6.8 l-3.8 -1.5 v-5.3 l-5.2 -6 z" fill="#6f9bd0" stroke="#4a72a6" stroke-width="0.7"/><rect x="58" y="159" width="12" height="2" fill="#f3e04a"/><path d="M83 160 h13 M83.5 160 v13" stroke="#aaa" stroke-width="0.8"/><rect x="85.5" y="163" width="3" height="3" fill="#f08a15"/><rect x="85.5" y="169" width="3" height="3" fill="#f08a15"/><path d="M92 158 l5.5 5.5 h-3.5 v8.5 h-4 v-8.5 h-3.5 z" fill="#6f9bd0" stroke="#2f4f7a" stroke-width="0.8"/><circle cx="114" cy="166" r="7" fill="#6f9bd0" stroke="#4a72a6" stroke-width="0.6"/><path d="M113.3 164.5 l1.8 -0.3 l-1.3 5.3 M114.8 161.8 v0.2" stroke="#fff" stroke-width="1.5" stroke-linecap="round" fill="none"/><path d="M6 206 l5 4 l-5 4 z" fill="#444"/><path d="M6 224 l5 4 l-5 4 z" fill="#444"/><path d="M6 242 l5 4 l-5 4 z" fill="#444"/><path d="M6 260 l5 4 l-5 4 z" fill="#444"/><path d="M6 278 l5 4 l-5 4 z" fill="#444"/><path d="M4 369 h9 l-4.5 5 z" fill="#444"/><path d="M30 184.5 l2.3 4.8 l5.2 0.7 l-3.8 3.6 l0.9 5.2 l-4.6 -2.5 l-4.6 2.5 l0.9 -5.2 l-3.8 -3.6 l5.2 -0.7 z" fill="#fbef5c" stroke="#d9b12c" stroke-width="0.9" stroke-linejoin="round"/><path d="M23 203 h5 l1.5 1.5 h7 v12 h-13.5 z" fill="#a6d35a" stroke="#7c9a63" stroke-width="0.8"/><path d="M23.5 209 L36.5 215 M28 216 L35 204" stroke="#eaf5d8" stroke-width="0.9"/><path d="M30 205 h6 v4 l-3 2 l-3 -3 z" fill="#1c9c2a"/><path d="M23 221 h5 l1.5 1.5 h7 v12 h-13.5 z" fill="#f3f3f3" stroke="#8a8a8a" stroke-width="0.8"/><path d="M26.8 231 v-3.5 l3 -2.7 l3 2.7 v3.5 z" fill="none" stroke="#222" stroke-width="0.9"/><path d="M23 239 h5 l1.5 1.5 h7 v12 h-13.5 z" fill="#efefef" stroke="#8a8a8a" stroke-width="0.8"/><path d="M22.5 262 L29.5 265.5 V271.5 L22.5 268 Z" fill="#d0aa0f" stroke="#555" stroke-width="0.5"/><path d="M29.5 265.5 L37.5 262 V268 L29.5 271.5 Z" fill="#f6e76a" stroke="#555" stroke-width="0.5"/><circle cx="30" cy="261" r="5" fill="#7aa7d8" stroke="#40679a" stroke-width="0.5"/><path d="M22.5 262 L29.5 265.5 L37.5 262 L30 259 Z" fill="#f8ec86" stroke="#555" stroke-width="0.5"/><path d="M26 259 q4 -5 8 0" fill="#7aa7d8" stroke="#40679a" stroke-width="0.5"/><path d="M22 291 Q24 282 30 278 Q34 275.5 37 274.5 Q36 280 32 284 Q27 288 23.5 288.5 Z" fill="#8fb3dc" stroke="#4d73a2" stroke-width="0.7"/><path d="M23.5 297 Q22 292 26 291.5 Q28.5 291 30 292.5 Q32 291 35 291.5 Q38.5 292.5 37.5 297 Q37 300 34.5 300.5 L35.5 302.5 L33.5 302 Q32 302.5 31.5 301.5 L31 306.5 Q30 308.5 28.5 307 L28 302 Q26 302 25 300 Q23.8 299 23.5 297 Z" fill="#6f9bd0" stroke="#3f6797" stroke-width="0.7"/><path d="M26.5 293.5 q-1 4 1 7 M30 292.5 q1.5 3 0.5 7 M33 294 q2 1 1.5 4" stroke="#3f6797" stroke-width="0.7" fill="none"/><path d="M22 310.5 Q30 310.5 37.5 316 Q30 320 22.5 323.5 Q25.5 317 22 310.5 Z" fill="#6f9bd0" stroke="#3f6797" stroke-width="0.6"/><path d="M26.5 312 q1 4 0 9 M29.5 313 q1 3.5 0 7 M32.5 314 q0.6 2.5 0 5" stroke="#3f6797" stroke-width="0.6" fill="none"/><rect x="22" y="328" width="16" height="16" rx="2.5" fill="#6f9bd0"/><text x="23" y="339" font-family="Liberation Sans" font-size="6.5" fill="#fff">DB2</text><circle cx="30" cy="354" r="7.5" fill="#c5d9f0" stroke="#4f80c0" stroke-width="1"/><path d="M25 351 q2 -2 4 -1 q1 2 -1 3 q0 3 -2 4 q-2 -2 -1 -6z M31 349 q3 0 4 2 q-1 2 -3 1 z M31 354 q3 -1 4 2 q-1 3 -3 3 q-1 -2 -1 -5z" fill="#3a5e8c"/><circle cx="30" cy="372" r="7.5" fill="#c5d9f0" stroke="#4f80c0" stroke-width="1"/><path d="M25 369 q2 -2 4 -1 q1 2 -1 3 q0 3 -2 4 q-2 -2 -1 -6z M31 367 q3 0 4 2 q-1 2 -3 1 z M31 372 q3 -1 4 2 q-1 3 -3 3 q-1 -2 -1 -5z" fill="#3a5e8c"/><rect x="44.0" y="384.0" width="4.4" height="4.3" fill="#1f3550"/><rect x="44.0" y="402.0" width="4.4" height="4.3" fill="#1f3550"/><rect x="44.0" y="420.0" width="4.4" height="4.3" fill="#1f3550"/><rect x="48.4" y="384.0" width="4.4" height="4.3" fill="#b3cfec"/><rect x="48.4" y="402.0" width="4.4" height="4.3" fill="#b3cfec"/><rect x="48.4" y="420.0" width="4.4" height="4.3" fill="#b3cfec"/><rect x="52.8" y="384.0" width="4.4" height="4.3" fill="#1f3550"/><rect x="52.8" y="402.0" width="4.4" height="4.3" fill="#1f3550"/><rect x="52.8" y="420.0" width="4.4" height="4.3" fill="#1f3550"/><rect x="44.0" y="388.3" width="4.4" height="4.3" fill="#b3cfec"/><rect x="44.0" y="406.3" width="4.4" height="4.3" fill="#b3cfec"/><rect x="44.0" y="424.3" width="4.4" height="4.3" fill="#b3cfec"/><rect x="48.4" y="388.3" width="4.4" height="4.3" fill="#1f3550"/><rect x="48.4" y="406.3" width="4.4" height="4.3" fill="#1f3550"/><rect x="48.4" y="424.3" width="4.4" height="4.3" fill="#1f3550"/><rect x="52.8" y="388.3" width="4.4" height="4.3" fill="#b3cfec"/><rect x="52.8" y="406.3" width="4.4" height="4.3" fill="#b3cfec"/><rect x="52.8" y="424.3" width="4.4" height="4.3" fill="#b3cfec"/><rect x="44.0" y="392.6" width="4.4" height="4.3" fill="#1f3550"/><rect x="44.0" y="410.6" width="4.4" height="4.3" fill="#1f3550"/><rect x="44.0" y="428.6" width="4.4" height="4.3" fill="#1f3550"/><rect x="48.4" y="392.6" width="4.4" height="4.3" fill="#b3cfec"/><rect x="48.4" y="410.6" width="4.4" height="4.3" fill="#b3cfec"/><rect x="48.4" y="428.6" width="4.4" height="4.3" fill="#b3cfec"/><circle cx="30" cy="444" r="7.5" fill="#3f6aa0" stroke="#2d5080" stroke-width="1"/><ellipse cx="30" cy="444" rx="3" ry="7" fill="#c5d9f0"/><path d="M23 441.5 h14 M23 446.5 h14" stroke="#fff" stroke-width="1.2"/><circle cx="30" cy="462" r="7.5" fill="#c5d9f0" stroke="#4f80c0" stroke-width="1"/><path d="M22.5 462 h15 M23.5 458.5 h13 M23.5 465.5 h13" stroke="#8fb0dc" stroke-width="0.7"/><ellipse cx="30" cy="462" rx="3.2" ry="7.5" fill="none" stroke="#8fb0dc" stroke-width="0.7"/><path d="M26 458 L29 467 L33 458" fill="none" stroke="#333" stroke-width="1"/><circle cx="30" cy="480" r="7.5" fill="#c5d9f0" stroke="#4f80c0" stroke-width="1"/><path d="M22.5 480 h15 M23.5 476.5 h13 M23.5 483.5 h13" stroke="#8fb0dc" stroke-width="0.7"/><ellipse cx="30" cy="480" rx="3.2" ry="7.5" fill="none" stroke="#8fb0dc" stroke-width="0.7"/><circle cx="30" cy="498" r="7.5" fill="#c5d9f0" stroke="#4f80c0" stroke-width="1"/><path d="M25 495 q2 -2 4 -1 q1 2 -1 3 q0 3 -2 4 q-2 -2 -1 -6z M31 493 q3 0 4 2 q-1 2 -3 1 z M31 498 q3 -1 4 2 q-1 3 -3 3 q-1 -2 -1 -5z" fill="#3a5e8c"/><path d="M23 499 q3 -2 6 1 q1 3 -2 6 q-3 0 -4 -3z" fill="#1e2a3a"/><circle cx="30" cy="516" r="7.5" fill="#c5d9f0" stroke="#4f80c0" stroke-width="1"/><path d="M22.5 516 h15 M23.5 512.5 h13 M23.5 519.5 h13" stroke="#8fb0dc" stroke-width="0.7"/><ellipse cx="30" cy="516" rx="3.2" ry="7.5" fill="none" stroke="#8fb0dc" stroke-width="0.7"/><path d="M23 517 q3 -2 6 1 q1 3 -2 6 q-3 0 -4 -3z M29 511 q3 -1 5 -4" fill="#1e2a3a" stroke="#333" stroke-width="0.5"/><g stroke="#6f9bd0" stroke-width="2.6" stroke-linecap="round"><path d="M30 527.5 v13 M24.5 530.5 l11 7 M24.5 537.5 l11 -7"/></g><circle cx="30" cy="534" r="2" fill="#6f9bd0"/><rect x="108" y="565" width="1.2" height="1.2" fill="#aca69f"/><rect x="111" y="565" width="1.2" height="1.2" fill="#aca69f"/><rect x="114" y="565" width="1.2" height="1.2" fill="#aca69f"/><rect x="117" y="565" width="1.2" height="1.2" fill="#aca69f"/><rect x="120" y="565" width="1.2" height="1.2" fill="#aca69f"/><rect x="123" y="565" width="1.2" height="1.2" fill="#aca69f"/><rect x="234" y="558" width="1.2" height="1.2" fill="#b8b2ab"/><rect x="234" y="561" width="1.2" height="1.2" fill="#b8b2ab"/><rect x="234" y="564" width="1.2" height="1.2" fill="#b8b2ab"/><rect x="234" y="567" width="1.2" height="1.2" fill="#b8b2ab"/><rect x="234" y="570" width="1.2" height="1.2" fill="#b8b2ab"/><rect x="234" y="573" width="1.2" height="1.2" fill="#b8b2ab"/><path d="M7 602 l6 -5 l6 3 l-4 8 z" fill="#f3e04a"/><path d="M7 603 l3 -2 l5 4 l-2 3 z" fill="#6f9bd0"/><path d="M7 604 l2 -1 l5 5 l-2 1 z" fill="#e33"/><path d="M13 605 l3 -3 l3 3 l-3 3 z" fill="#d9a05a"/><path d="M16 603 l5 -5.5" stroke="#c8892a" stroke-width="1.6"/><path d="M32.5 601 v9 h9 M34.5 599 v9 h9" fill="none" stroke="#777" stroke-width="0.8"/><rect x="36.5" y="597" width="8.5" height="10" fill="#f0f0f0" stroke="#777" stroke-width="0.8"/><path d="M39.5 605 v-7 q1.5 -2 3 0 v6" stroke="#2f5a90" stroke-width="0.9" fill="none"/><circle cx="43" cy="607.5" r="3.2" fill="#cfe3cf" stroke="#4f8d52" stroke-width="1.6"/><path d="M57 603 Q64 596 72 603 Q64 609 57 603 Z" fill="#f4f4f4" stroke="#888" stroke-width="0.7"/><circle cx="64" cy="603" r="3.5" fill="#6f9bd0"/><circle cx="64" cy="602.5" r="1.1" fill="#111"/><path d="M68.5 608 h6 l-3 3 z" fill="#222"/><path d="M82 596.0 h14 v1.5 l-5 6 v6.8 l-3.8 -1.5 v-5.3 l-5.2 -6 z" fill="#6f9bd0" stroke="#4a72a6" stroke-width="0.7"/><rect x="83" y="596.5" width="12" height="2" fill="#f3e04a"/><text x="107" y="606" font-family="Liberation Serif" font-size="14" fill="#6a2a8a">&#949;</text><rect x="114.5" y="603" width="7" height="8" rx="1" fill="#bdbdbd"/><path d="M127 601 h9 l-4.5 5 z" fill="#333"/><path d="M144.5 597 h12 M145 597 v13" stroke="#aaa" stroke-width="0.8"/><rect x="147" y="600" width="3" height="3" fill="#f08a15"/><rect x="147" y="606" width="3" height="3" fill="#f08a15"/><path d="M153 596 v9 h-3.5 l5.5 6 l5.5 -6 h-3.5 v-9 z" fill="#6f9bd0" stroke="#2f4f7a" stroke-width="0.8"/><path d="M169.5 597 h12 M170 597 v13" stroke="#aaa" stroke-width="0.8"/><rect x="172" y="600" width="3" height="3" fill="#f08a15"/><rect x="172" y="606" width="3" height="3" fill="#f08a15"/><path d="M178 611 v-9 h-3.5 l5.5 -6 l5.5 6 h-3.5 v9 z" fill="#6f9bd0" stroke="#2f4f7a" stroke-width="0.8"/><rect x="194" y="596.5" width="11.5" height="11.5" fill="#ececec" stroke="#7b7b7b" stroke-width="1"/><rect x="202" y="606" width="6.5" height="4" rx="1.5" fill="#e33"/><path d="M203.5 608 h3.5" stroke="#fff" stroke-width="1"/><rect x="22.5" y="622.5" width="13" height="13" fill="#fff" stroke="#c9bfb0" stroke-width="1"/><path d="M25.3 628.8 l2.6 4.2 l5 -8.3" fill="none" stroke="#000" stroke-width="1.7"/><rect x="42.5" y="621.5" width="15" height="15" fill="#b07aa0" stroke="#5d4a58" stroke-width="1"/></svg>
<svg style="position:absolute;left:238px;top:133px" width="1673" height="864" viewBox="238 133 1673 864"><defs><clipPath id="mc"><polygon points="337.0,400.0 427.0,400.0 427.0,409.0 500.0,410.0 500.0,418.0 620.0,418.5 645.0,419.0 645.0,402.0 954.0,402.0 1267.0,402.0 1439.0,401.5 1439.0,375.5 1740.0,370.5 1870.0,368.0 1869.9,368.9 1869.8,370.8 1869.6,373.6 1869.4,377.4 1869.3,380.9 1869.4,384.3 1869.8,387.5 1870.2,390.5 1870.3,393.5 1869.9,396.5 1869.1,399.5 1867.9,402.5 1866.4,404.9 1864.6,406.8 1862.6,408.1 1860.4,408.9 1858.9,409.9 1858.1,411.1 1858.1,412.6 1858.9,414.4 1859.1,415.9 1858.9,417.3 1858.1,418.5 1856.9,419.5 1855.0,421.2 1852.5,423.8 1849.4,427.0 1845.6,431.0 1842.3,434.3 1839.4,436.9 1837.0,438.9 1835.0,440.1 1832.9,442.1 1830.8,444.7 1828.6,448.0 1826.4,452.0 1825.1,455.3 1824.7,457.9 1825.2,459.9 1826.8,461.1 1828.3,462.6 1829.9,464.4 1831.6,466.4 1833.4,468.6 1834.2,470.5 1834.2,472.0 1833.4,473.1 1831.6,473.9 1830.9,475.2 1831.1,477.2 1832.4,479.9 1834.6,483.1 1836.0,486.2 1836.5,489.2 1836.1,492.1 1834.9,494.9 1833.5,497.1 1832.0,498.7 1830.4,499.8 1828.6,500.2 1827.6,501.9 1827.2,504.6 1827.5,508.5 1828.5,513.5 1829.1,517.6 1829.4,520.7 1829.2,522.9 1828.8,524.1 1829.1,526.8 1830.2,530.9 1832.1,536.5 1834.9,543.5 1836.8,549.9 1837.9,555.6 1838.2,560.8 1837.8,565.2 1837.8,569.4 1838.4,573.1 1839.6,576.5 1841.4,579.5 1842.8,582.1 1843.9,584.4 1844.8,586.2 1845.2,587.8 1845.2,589.3 1844.8,590.9 1843.8,592.6 1842.2,594.4 1840.4,596.0 1838.3,597.5 1835.9,598.9 1833.1,600.1 1831.1,601.6 1829.7,603.4 1829.0,605.4 1829.0,607.6 1829.4,609.6 1830.3,611.4 1831.6,612.9 1833.4,614.1 1834.1,615.4 1833.9,616.8 1832.6,618.2 1830.4,619.8 1829.0,621.3 1828.5,622.9 1828.9,624.6 1830.1,626.4 1830.9,628.2 1831.1,630.1 1830.9,632.0 1830.1,634.0 1829.8,636.0 1829.8,638.0 1830.1,640.0 1830.9,642.0 1830.9,644.3 1830.3,646.9 1829.0,649.9 1827.0,653.1 1825.4,656.1 1824.1,658.9 1823.2,661.4 1822.8,663.6 1823.0,666.1 1824.0,668.9 1825.8,671.9 1828.2,675.1 1829.1,678.4 1828.2,681.8 1825.6,685.2 1821.4,688.8 1818.1,691.9 1815.7,694.8 1814.2,697.4 1813.8,699.6 1812.8,701.6 1811.2,703.4 1809.2,704.9 1806.8,706.1 1804.3,707.8 1801.9,709.9 1799.6,712.5 1797.4,715.5 1795.1,718.9 1792.7,722.8 1790.2,727.1 1787.8,731.9 1785.8,736.2 1784.4,740.1 1783.6,743.5 1783.4,746.5 1783.2,748.8 1783.1,750.2 1783.0,751.0 1681.0,753.0 1681.0,755.0 1620.0,755.5 1260.0,760.0 880.0,761.0 592.0,760.0 592.0,757.0 489.0,756.0 489.0,744.0 470.0,738.0 425.0,720.0 426.0,712.0 357.0,711.0 357.0,707.0 360.0,707.0 360.0,702.0 357.0,702.0 357.0,694.0 405.0,622.0 374.0,596.0 346.0,590.0 346.0,562.0 342.0,562.0 324.0,555.0 285.0,501.0 279.0,501.0 278.0,484.0 288.0,484.0 288.0,463.0 311.0,463.0 311.0,434.0 337.0,426.0"/></clipPath></defs><polygon points="337.0,400.0 427.0,400.0 427.0,409.0 500.0,410.0 500.0,418.0 620.0,418.5 645.0,419.0 645.0,402.0 954.0,402.0 1267.0,402.0 1439.0,401.5 1439.0,375.5 1740.0,370.5 1870.0,368.0 1869.9,368.9 1869.8,370.8 1869.6,373.6 1869.4,377.4 1869.3,380.9 1869.4,384.3 1869.8,387.5 1870.2,390.5 1870.3,393.5 1869.9,396.5 1869.1,399.5 1867.9,402.5 1866.4,404.9 1864.6,406.8 1862.6,408.1 1860.4,408.9 1858.9,409.9 1858.1,411.1 1858.1,412.6 1858.9,414.4 1859.1,415.9 1858.9,417.3 1858.1,418.5 1856.9,419.5 1855.0,421.2 1852.5,423.8 1849.4,427.0 1845.6,431.0 1842.3,434.3 1839.4,436.9 1837.0,438.9 1835.0,440.1 1832.9,442.1 1830.8,444.7 1828.6,448.0 1826.4,452.0 1825.1,455.3 1824.7,457.9 1825.2,459.9 1826.8,461.1 1828.3,462.6 1829.9,464.4 1831.6,466.4 1833.4,468.6 1834.2,470.5 1834.2,472.0 1833.4,473.1 1831.6,473.9 1830.9,475.2 1831.1,477.2 1832.4,479.9 1834.6,483.1 1836.0,486.2 1836.5,489.2 1836.1,492.1 1834.9,494.9 1833.5,497.1 1832.0,498.7 1830.4,499.8 1828.6,500.2 1827.6,501.9 1827.2,504.6 1827.5,508.5 1828.5,513.5 1829.1,517.6 1829.4,520.7 1829.2,522.9 1828.8,524.1 1829.1,526.8 1830.2,530.9 1832.1,536.5 1834.9,543.5 1836.8,549.9 1837.9,555.6 1838.2,560.8 1837.8,565.2 1837.8,569.4 1838.4,573.1 1839.6,576.5 1841.4,579.5 1842.8,582.1 1843.9,584.4 1844.8,586.2 1845.2,587.8 1845.2,589.3 1844.8,590.9 1843.8,592.6 1842.2,594.4 1840.4,596.0 1838.3,597.5 1835.9,598.9 1833.1,600.1 1831.1,601.6 1829.7,603.4 1829.0,605.4 1829.0,607.6 1829.4,609.6 1830.3,611.4 1831.6,612.9 1833.4,614.1 1834.1,615.4 1833.9,616.8 1832.6,618.2 1830.4,619.8 1829.0,621.3 1828.5,622.9 1828.9,624.6 1830.1,626.4 1830.9,628.2 1831.1,630.1 1830.9,632.0 1830.1,634.0 1829.8,636.0 1829.8,638.0 1830.1,640.0 1830.9,642.0 1830.9,644.3 1830.3,646.9 1829.0,649.9 1827.0,653.1 1825.4,656.1 1824.1,658.9 1823.2,661.4 1822.8,663.6 1823.0,666.1 1824.0,668.9 1825.8,671.9 1828.2,675.1 1829.1,678.4 1828.2,681.8 1825.6,685.2 1821.4,688.8 1818.1,691.9 1815.7,694.8 1814.2,697.4 1813.8,699.6 1812.8,701.6 1811.2,703.4 1809.2,704.9 1806.8,706.1 1804.3,707.8 1801.9,709.9 1799.6,712.5 1797.4,715.5 1795.1,718.9 1792.7,722.8 1790.2,727.1 1787.8,731.9 1785.8,736.2 1784.4,740.1 1783.6,743.5 1783.4,746.5 1783.2,748.8 1783.1,750.2 1783.0,751.0 1681.0,753.0 1681.0,755.0 1620.0,755.5 1260.0,760.0 880.0,761.0 592.0,760.0 592.0,757.0 489.0,756.0 489.0,744.0 470.0,738.0 425.0,720.0 426.0,712.0 357.0,711.0 357.0,707.0 360.0,707.0 360.0,702.0 357.0,702.0 357.0,694.0 405.0,622.0 374.0,596.0 346.0,590.0 346.0,562.0 342.0,562.0 324.0,555.0 285.0,501.0 279.0,501.0 278.0,484.0 288.0,484.0 288.0,463.0 311.0,463.0 311.0,434.0 337.0,426.0" fill="#e8708a"/><path clip-path="url(#mc)" d="M954.4 403.3L953.9 431.9L953.9 454.1L954.4 480.0L954.4 505.8L954.4 585.0M940.0 454.1L953.9 454.1M940.0 471.6L954.4 479.0M954.4 479.6L988.9 479.6L988.9 505.3L1005.6 505.3L1005.6 522.4L1022.7 522.4L1022.7 531.7L1031.4 531.7L1031.4 540.0L1040.7 540.0L1040.7 548.3L1056.7 548.3L1056.7 585.0M988.9 496.9L1004.6 505.3M940.0 505.3L954.4 505.3M954.4 495.7L966.8 488.3L971.4 488.8L971.4 516.0L976.0 516.5L976.0 531.3L997.3 531.3L997.3 505.8M1057.5 505.8L1162.5 505.8L1163.5 507.3L1265.4 506.7M1057.5 505.8L1057.5 556.6M1266.5 403.3L1266.5 480.0L1266.9 505.8L1265.4 555.7L1261.7 556.6L1261.7 585.0M1266.9 480.0L1280.0 480.0M1266.9 505.3L1280.0 505.3M954.4 531.7L958.5 532.0L963.1 533.5L963.6 540.0L988.9 540.0L988.9 556.0L1012.0 556.6L1013.5 572.3L987.6 573.2M1056.7 556.6L1064.1 557.0L1064.7 565.3L1107.1 565.3L1107.1 585.0M1022.2 556.6L1056.7 556.6M1022.2 556.6L1022.2 585.0M971.8 540.0L971.8 554.2L976.9 555.7L988.9 564.5L997.3 565.8L1004.6 572.3M940.0 556.6L954.4 561.2L986.2 577.8L1000.9 585.0M954.4 542.7L961.2 542.7L962.2 552.0L954.4 552.9M1005.6 552.9L1014.8 552.3L1019.4 566.8L1022.2 576.0M987.6 565.3L995.4 565.3L995.4 571.4L987.6 571.4M940.0 575.1L969.5 575.1L970.5 581.5M1039.7 582.5L1064.7 582.5M1107.1 575.0L1107.1 611.9L1113.6 616.6L1114.5 659.0M1056.3 599.9L1069.3 599.0L1080.4 604.5L1106.2 611.0L1124.7 612.9L1142.2 616.6L1239.2 616.6L1240.1 620.2L1236.4 621.2L1237.3 624.9L1243.8 623.9L1254.0 620.2L1280.0 617.5M1261.7 575.0L1261.7 607.3L1280.0 607.3M1030.5 659.0L1209.6 659.6L1210.6 760.6M1030.5 659.0L1029.6 676.6L1013.9 677.5M1013.5 617.5L1013.5 685.8L1021.3 685.8L1022.2 690.4L1038.8 691.3L1039.7 694.1L1050.8 694.7L1051.7 702.4L1055.4 703.4L1056.3 711.7L1065.6 711.7L1069.3 708.9L1056.3 700.6L1055.4 685.8L1081.3 685.4M1081.3 668.3L1097.0 668.3L1107.1 677.5L1107.1 660.0M1107.1 677.5L1121.9 679.3L1128.4 684.0L1129.3 704.3L1133.9 708.0L1144.1 715.4L1145.4 719.1L1145.4 738.4L1149.6 739.4L1150.5 743.4L1158.8 743.4L1159.8 752.3L1167.5 752.7L1167.5 760.6M1081.3 685.4L1081.3 702.4L1098.8 702.4L1098.8 696.0L1107.1 695.0M1098.8 702.4L1098.8 706.5L1107.1 707.0L1107.1 711.7L1133.0 711.7L1133.5 718.1L1145.4 718.1M1064.7 702.4L1098.8 702.4M1064.7 711.7L1063.7 735.7L1072.0 736.0L1072.6 743.4L1081.3 744.0L1081.8 752.7L1090.0 753.2L1090.0 760.6M1021.3 690.4L1021.3 703.4L1030.1 703.4L1030.5 711.7L1038.8 712.6L1039.7 718.1L1047.1 722.7L1047.1 760.6M1030.5 711.7L1030.5 722.7L1038.8 723.7L1039.7 735.7L1047.1 735.7M978.8 677.5L979.7 685.4L996.3 685.8L996.3 711.7L1005.0 711.7L1005.6 727.4L1013.9 727.9L1013.9 744.0L1022.2 744.5L1022.2 760.6M970.5 575.0L970.5 651.6L970.5 760.6M952.9 651.6L952.9 694.1L962.2 694.7L962.2 702.4L970.5 702.8M957.5 599.0L1056.3 599.0M944.1 599.9L944.1 651.1L970.5 651.1M940.0 617.1L951.1 616.6L957.5 614.7L970.5 616.6M987.6 575.0L987.6 617.5L987.6 676.6M978.8 660.0L978.8 676.6L1013.9 676.9M952.9 660.0L978.8 660.3M962.2 660.0L962.2 668.3L978.8 668.8M970.5 608.2L978.8 608.2L979.7 617.1L996.3 617.1L996.3 599.0M973.2 645.2L984.3 642.4L985.2 634.1L987.1 633.7L987.6 645.2L991.7 647.9L988.0 652.6L987.1 660.0M1236.4 742.1L1242.9 744.0L1254.0 752.3L1262.3 759.7M1056.3 575.0L1056.3 599.0L1056.3 608.2L1064.7 609.2L1064.7 617.1L1013.5 617.5M1039.7 582.4L1064.7 582.4L1064.7 599.0M1013.9 582.4L1023.1 586.1L1026.8 591.3L1037.9 591.3L1039.7 582.4M1030.5 617.5L1047.1 628.6L1039.7 634.1L1039.7 642.4L1047.1 643.3L1048.0 651.1L1056.3 651.6L1056.3 659.0M1050.8 617.5L1056.3 630.4L1067.4 638.7L1069.3 645.2L1081.3 659.0M1004.6 599.0L1004.6 634.1L1013.5 634.1M957.5 582.4L969.5 582.4L970.5 578.7M940.0 582.4L957.5 582.4L957.5 599.0M1628.6 372.0L1629.8 551.2L1624.6 553.2L1624.6 706.6L1629.8 708.6L1629.8 754.4M1270.0 617.0L1313.8 611.8L1389.5 592.3L1407.5 591.9L1443.3 597.1L1556.9 634.9L1604.7 650.9L1624.6 650.9L1708.3 646.9L1748.1 647.7M1270.0 478.7L1377.6 478.7L1377.6 530.5L1317.0 530.5L1315.8 555.2L1313.8 557.2L1314.6 758.4M1270.0 505.4L1317.0 505.4L1317.0 530.5M1270.0 607.0L1313.8 607.0M1808.7 647.4L1784.7 648.7L1747.8 648.3L1707.1 647.4L1624.0 651.1M1624.9 673.3L1650.8 672.7L1650.8 680.7L1642.8 681.2L1642.5 689.9L1634.2 689.9L1634.2 681.2L1624.9 681.2M1738.5 668.7L1791.2 667.7M1733.0 685.6L1792.1 685.3M1738.5 668.7L1736.7 676.0L1735.8 682.5L1733.0 685.6L1729.3 689.0L1729.3 698.2L1723.7 709.3L1722.8 720.4L1721.0 727.8L1722.8 742.5L1721.9 751.8M1791.2 667.7L1792.1 685.3L1793.0 722.2M1782.8 649.3L1782.8 659.4L1791.2 659.8L1791.2 667.7M1748.7 643.7L1757.9 643.7L1767.2 641.9L1778.2 643.7L1784.7 646.5L1790.2 645.6M1756.1 642.8L1756.1 610.5L1764.4 609.6L1764.4 616.9L1778.2 616.9L1780.1 624.3L1784.7 634.5L1788.4 635.4L1788.4 642.8L1792.1 647.4M1772.7 602.2L1784.7 601.2L1785.6 618.8L1793.9 625.3L1794.9 632.6L1816.1 632.6L1816.1 623.4L1813.3 622.5L1816.1 616.0L1835.5 615.5M1772.7 602.2L1772.7 608.6L1764.4 609.6M1784.7 600.3L1842.0 597.5M1793.0 633.6L1793.0 641.9L1800.4 640.0L1808.7 641.9L1808.7 647.4M1791.2 648.7L1791.2 652.0L1804.1 653.0L1805.9 658.5L1820.7 659.1L1824.4 670.5M1820.7 628.4L1830.9 628.4M1725.6 648.3L1727.4 652.0L1733.0 652.4L1734.8 655.7L1736.3 652.0M1748.7 643.7L1749.6 649.3M731.3 403.1L731.3 436.3L748.4 436.3L748.4 403.1M748.4 436.3L748.4 488.5M799.7 403.1L799.7 580.0M877.8 403.1L877.8 429.2L885.9 429.2L885.9 444.4L877.8 454.3L886.8 454.3L886.8 462.4L894.0 462.4L894.6 505.6M860.4 403.1L860.4 437.2L868.9 438.1L868.9 445.3L877.8 446.2L877.8 484.9L868.9 484.9L868.9 487.6L885.0 488.5L885.9 520.8M894.9 448.0L907.5 456.1L916.5 459.7L954.2 478.6M886.8 454.3L954.2 454.3M894.6 505.6L954.2 505.6M791.6 428.3L791.6 453.4L799.7 453.4M791.6 428.3L799.7 428.3L814.0 427.4L830.2 428.3L850.0 423.8L848.2 413.0L850.9 404.9M830.2 426.5L839.2 429.2L835.6 436.3L842.8 437.2L843.7 429.2L848.2 430.1L850.9 437.2L850.0 441.7L859.0 433.6L860.4 433.6M807.7 447.1L807.7 453.4L799.7 453.4M807.7 446.2L833.8 446.2L834.7 466.9L838.3 466.9M833.8 446.2L842.8 446.2L843.7 466.9L855.4 466.9M842.8 448.9L850.9 448.9L850.9 440.8M855.4 466.9L855.4 487.6L868.9 487.6M857.2 457.9L864.4 457.0L865.3 454.3L877.0 454.3M855.4 466.9L877.0 466.9M856.3 479.5L868.9 479.5M816.7 481.3L817.6 463.3L821.2 463.3L823.0 468.7L829.3 467.8L830.2 470.5L833.8 470.5M799.7 484.9L815.8 496.6L823.0 501.1M791.6 479.5L791.6 505.6L799.7 505.6M774.5 468.7L790.7 467.8L791.6 479.5M748.4 462.4L763.7 462.9L763.7 468.7L769.1 470.5L774.5 468.7L774.5 488.5L748.4 488.5M690.0 463.3L697.2 461.5L704.4 462.4L706.2 468.7L713.4 468.7L714.3 462.4L722.4 462.4L723.3 470.5L739.4 470.5L740.3 453.4L748.4 453.4M739.4 470.5L739.4 488.5L748.4 488.5M739.4 462.4L748.4 462.4M739.4 479.5L748.4 479.5M743.9 445.3L748.4 445.3M743.9 448.9L748.4 448.9M690.0 479.5L697.2 479.5L706.2 483.1L709.8 484.0L715.2 488.5L715.2 493.9L723.3 493.9L723.3 484.9L731.3 484.0L731.3 522.6M690.0 489.4L731.3 488.8L765.5 488.5M765.5 488.5L765.5 505.6L774.5 505.6L774.5 497.5L791.6 497.5M697.2 457.9L697.2 506.5L690.0 506.5M690.0 457.9L697.2 457.9M690.0 522.6L697.2 522.6L704.4 524.4L748.4 522.3L791.6 522.6L791.6 529.8L799.7 529.8M690.0 515.4L697.2 515.4L697.2 522.6M705.3 524.4L704.4 531.6L713.4 532.5L714.3 540.6L722.4 541.5L722.4 580.0M719.7 555.9L743.9 555.9L799.7 556.8M739.4 555.9L739.4 548.7L748.4 548.7L748.4 555.9M773.6 556.8L773.6 580.0M690.0 573.0L722.4 573.0M799.7 514.5L848.2 514.5L848.2 520.8L842.8 522.6L799.7 522.6M799.7 497.5L833.8 497.8L833.8 507.4L842.8 510.0L850.9 507.4L851.8 520.8M799.7 522.6L850.0 522.6L851.8 520.8L859.0 522.6L877.8 522.6M821.2 523.5L826.6 531.6L826.6 556.8L842.8 556.8L843.7 563.1L850.0 563.1M826.6 546.0L833.8 544.2L842.8 540.6L851.8 535.2L867.1 535.2L868.0 544.2M851.8 535.2L851.8 547.8L877.8 548.7M859.9 505.6L859.9 529.8L877.8 529.8M877.8 515.4L877.8 580.0M902.1 505.6L902.1 531.6L916.5 531.6L916.5 523.5L902.1 522.6M885.9 520.8L902.1 522.6M911.1 538.8L911.1 556.8L960.0 556.8M902.1 556.8L902.1 580.0M868.9 508.2L868.9 538.8L877.8 538.8M842.8 556.8L850.0 557.7L850.0 580.0M864.4 544.2L868.0 546.9L871.6 553.2L865.3 564.0M881.4 540.6L898.5 541.5L898.5 548.7L881.4 548.7M885.9 551.4L894.9 553.2L896.7 560.4L911.1 556.8M936.3 556.8L936.3 580.0M923.7 556.8L923.7 580.0M690.0 538.8L693.6 542.4L690.0 547.8M743.9 556.8L747.5 565.8L742.1 574.8L733.1 580.0M749.3 560.4L761.9 558.6L760.1 567.6L754.7 580.0M690.0 582.0L722.3 582.4L722.3 693.2L738.9 693.6L738.9 760.6M730.6 590.7L765.3 590.7L765.3 607.3L730.6 607.3L730.6 590.7M739.5 607.3L739.5 640.6L732.5 641.5L730.6 649.8L722.3 650.3M748.2 608.2L748.2 633.2L787.9 633.2L795.3 621.2L799.0 609.2M757.4 608.2L763.9 611.9L773.1 621.2L780.5 633.2M799.0 609.2L849.7 609.2L849.7 660.0L847.0 660.9L846.6 760.6M799.9 575.0L799.0 609.2L799.9 650.7L807.3 651.6L808.2 660.0L822.0 660.9L821.1 681.2L811.9 678.4L805.4 665.5L802.7 671.0L799.0 665.5L791.6 663.6L783.3 660.0M690.0 641.5L704.8 641.5L705.7 649.8L722.3 650.3M732.5 641.5L756.5 641.9L756.9 649.8L774.0 650.7L774.6 658.1L722.3 659.0M774.6 658.1L783.3 660.0M783.3 660.0L783.3 667.3L791.6 668.3L792.5 675.6L800.8 676.2L800.8 683.0L812.8 684.0L812.8 751.4L821.1 752.3L821.1 760.6M705.7 675.6L722.3 675.6M705.7 675.6L704.8 692.3L696.5 693.2L696.5 760.6M729.7 694.1L717.7 704.3L708.5 717.2L697.4 720.9L690.0 725.5M738.9 751.4L763.9 752.3L763.9 760.6M815.6 575.0L815.6 608.2M849.7 575.0L849.7 591.6L841.4 591.6L841.4 608.2M849.7 625.8L858.1 625.8L859.0 643.3L867.3 644.3L868.2 650.7L883.9 650.7L883.9 660.0L889.5 660.0L889.5 683.0L847.0 683.6M875.6 575.0L875.6 625.8L883.9 626.7L884.8 634.1L875.6 635.0L875.6 650.7M875.6 635.0L901.5 634.5L901.5 660.0L898.3 660.9L898.3 760.6M927.3 575.0L927.3 660.0L928.2 760.6M898.7 702.4L906.1 702.4L907.0 711.7L910.7 712.0L911.2 718.1L927.3 718.7M875.6 591.3L901.5 591.6L902.4 612.9L907.9 613.8L914.4 609.2L918.1 617.5M927.3 617.5L944.9 617.5L944.9 650.7L954.1 650.7L954.1 660.0L954.1 694.1L960.0 694.1M919.0 634.1L927.3 634.1M919.0 617.5L919.0 634.1M884.8 591.3L884.8 617.5L901.5 617.5M893.1 591.3L893.1 599.9L901.5 599.9M894.1 608.2L901.5 608.2M944.9 613.8L950.4 613.8L950.4 634.1L944.9 634.1M944.9 602.7L955.9 593.5L960.0 589.8M954.1 660.0L960.0 660.0M902.4 580.5L909.8 586.1L926.4 586.1M928.2 582.4L931.9 582.4L931.9 575.0M940.2 582.4L960.0 582.4M723.2 576.8L739.9 576.8M774.0 581.5L799.9 581.5M774.0 575.0L774.0 581.5M733.4 583.3L749.1 582.4L756.5 576.8M902.4 593.5L907.9 595.3L919.0 593.5L926.4 589.8M907.0 600.9L919.0 599.0M894.1 617.5L893.1 630.4L884.8 634.1M902.4 637.8L906.1 635.9L903.3 645.2M551.5 418.4L551.5 580.0M593.8 418.4L593.8 468.7L610.8 468.7L610.8 502.9M645.5 418.4L645.5 580.0M485.0 502.9L551.5 503.8L610.8 504.7L646.8 505.6L700.0 506.5M551.5 463.3L574.9 484.9L596.5 502.9L621.6 531.6L643.2 549.6L664.8 565.8L680.9 574.8M508.4 423.8L551.5 447.1L592.9 461.5L610.8 462.4L645.5 463.3L700.0 462.4M551.5 508.3L528.1 538.8L517.4 565.8M485.0 506.5L495.8 538.8L517.4 565.8L521.0 580.0M592.9 461.5L582.1 477.7L574.9 486.7M578.5 511.8L585.7 510.1L600.1 517.2L625.2 531.6M508.4 418.4L508.4 502.9M490.4 418.4L490.4 502.9M526.3 418.4L526.3 431.0L533.5 436.3L533.5 448.9M485.0 431.0L526.3 432.8L551.5 438.1M500.3 443.5L533.5 444.4L551.5 445.3M485.0 454.3L551.5 456.1M490.4 470.5L533.5 470.5L551.5 472.3M485.0 481.3L508.4 481.3L533.5 479.5L551.5 479.5M490.4 490.3L508.4 490.3L526.3 484.9L544.3 478.6L551.5 490.3M503.0 511.8L533.5 513.6L551.5 511.8L576.7 512.7L610.8 513.6M517.4 524.4L551.5 524.4L585.7 524.4M517.4 529.8L517.4 555.0L549.7 555.0M544.3 531.6L551.5 531.6L551.5 565.8M521.0 565.8L576.7 565.8L646.8 565.8M576.7 510.1L576.7 580.0M585.7 524.4L585.7 553.2L592.9 553.2L610.8 551.4L646.8 551.4M592.9 553.2L601.8 556.8L679.1 556.8M610.8 468.7L621.6 466.9L628.8 481.3L645.5 483.1M645.5 490.3L700.0 490.3M655.8 504.7L700.0 504.7M645.5 520.8L679.1 522.6L700.0 520.8M645.5 529.8L679.1 531.6L700.0 531.6M610.8 495.7L619.8 484.9L630.6 479.5M621.6 420.2L621.6 502.9M634.2 427.4L636.0 466.9M577.6 418.4L577.6 436.3L592.9 438.1M564.1 435.4L592.9 438.1L610.8 439.9M485.0 574.8L700.0 574.8M671.1 402.2L671.1 457.9L700.0 457.9M645.5 431.0L659.4 432.8L671.1 436.3M655.8 413.0L652.2 429.2M645.5 470.5L663.0 470.5L663.0 506.5M680.0 477.7L680.0 488.5M679.1 515.4L700.0 515.4M679.1 515.4L679.1 580.0M688.1 519.0L688.1 580.0M689.0 457.9L689.0 479.5M485.0 422.0L508.4 423.8M485.0 441.7L500.3 443.5M485.0 465.1L508.4 466.9M503.0 448.9L503.0 502.9M533.5 448.9L533.5 502.9M544.3 448.9L544.3 479.5M517.4 470.5L517.4 490.3M495.8 470.5L495.8 490.3M508.4 511.8L506.6 520.8L517.4 524.4M565.9 477.7L560.5 463.3L555.1 465.1M596.5 502.9L585.7 497.5L576.7 486.7M610.8 504.7L609.0 513.6L621.6 520.8L632.4 520.8L634.2 510.1M592.9 418.4L614.4 420.2L621.6 420.2L645.5 420.2M596.5 443.5L610.8 439.9L621.6 448.9M593.8 448.9L621.6 448.9L634.2 452.5L645.5 452.5M623.4 470.5L618.0 475.9L614.4 488.5M485.0 531.6L495.8 538.8M485.0 551.4L503.0 562.2L517.4 565.8M585.7 553.2L589.3 546.0L592.9 544.2M610.8 551.4L614.4 565.8M592.9 565.8L596.5 580.0M645.5 538.8L655.8 542.4L664.8 538.8L679.1 540.6M655.8 556.8L661.2 574.8M485.0 581.5L585.7 581.5L700.0 582.0M542.3 581.5L542.3 678.4M585.7 581.5L585.7 599.0L595.8 595.3L605.1 593.5L614.3 599.0L616.1 615.6M688.2 575.0L688.2 604.6L679.9 607.3L678.9 676.6L662.3 675.7L661.4 691.4L656.8 691.4M679.9 641.5L700.0 641.5M645.7 598.1L645.7 613.8M645.7 598.1L675.2 598.1L675.2 582.4M618.0 608.2L630.9 607.3L645.7 613.8L660.5 621.2L669.7 624.9L678.9 624.9M625.4 582.4L625.4 606.4M485.0 606.4L542.3 606.4L558.9 607.3L566.3 614.7L569.0 634.1L566.3 643.3L558.9 648.9L551.5 660.0L542.3 678.4L540.4 689.5M570.0 633.2L595.8 632.3L595.8 624.9L602.3 624.9L602.3 671.0L577.4 675.7M603.2 608.2L605.1 626.7L603.2 630.4L603.2 658.1L610.6 658.1L610.6 654.4L623.5 654.4L626.3 639.6L618.0 637.8L618.0 628.6L612.4 628.6L611.5 637.8M626.3 639.6L627.2 704.3L627.2 715.4L641.1 717.2L635.5 759.7M627.2 659.0L678.9 658.1M640.2 652.6L647.5 648.9L669.7 645.2L678.9 643.3M640.2 652.6L643.8 667.4L653.1 684.0L654.9 700.6L658.6 708.0L656.8 722.8L651.2 741.2L669.7 748.6L688.2 759.7M542.3 650.7L584.7 650.7L602.3 649.8M485.0 648.9L499.8 646.1L503.5 645.2L507.2 652.6L521.9 650.7L542.3 650.7M485.0 636.0L499.8 636.0L499.8 606.4M485.0 656.3L496.1 665.5L507.2 674.7L521.9 685.8L536.7 704.3L540.4 715.4L547.8 726.5L555.2 741.2L562.6 746.8M485.0 665.5L492.4 685.8L503.5 695.1L516.4 708.0L527.5 722.8L536.7 733.8L540.4 741.2M516.4 656.3L527.5 671.0L540.4 685.8L555.2 700.6L566.3 715.4L577.4 726.5M485.0 695.1L503.5 713.5L518.2 726.5L536.7 730.2L540.4 756.0M485.0 733.8L494.2 735.7L499.8 744.9L510.9 737.5L521.9 730.2L536.7 730.2M584.7 709.8L599.5 711.7L618.0 707.1L618.0 700.6L627.2 700.6M570.0 713.5L584.7 704.3L588.4 704.3M575.5 689.5L618.0 689.5L618.0 682.1L625.4 671.0M570.0 676.6L575.5 689.5L582.9 696.9L584.7 709.8L585.7 737.5L594.0 737.5L594.0 759.7M594.0 730.2L605.1 733.8L625.4 737.5L636.5 733.8M567.2 726.5L584.7 726.5L594.0 730.2M643.8 735.7L643.8 759.7M627.2 708.0L669.7 708.0L678.9 704.3L688.2 715.4L700.0 722.8M696.5 693.2L696.5 759.7M521.9 658.1L521.0 678.4L540.4 678.4M533.9 639.6L533.9 674.7M509.0 640.6L509.0 648.9M485.0 622.1L516.4 621.2M551.5 660.0L551.5 685.8L558.9 685.8L559.8 693.2L567.2 693.2M558.9 684.0L575.5 684.0M507.2 744.9L507.2 756.0M531.2 744.9L531.2 756.0M516.4 575.0L516.4 599.0L525.6 602.7L540.4 597.2M485.0 589.8L499.8 589.8L499.8 599.0L516.4 599.0M525.6 606.4L525.6 630.4L516.4 632.3L516.4 621.2M485.0 628.6L492.4 628.6M492.4 611.9L507.2 611.9M529.3 689.5L540.4 693.2L533.0 704.3L544.1 708.0L540.4 715.4M536.7 704.3L551.5 700.6L558.9 704.3M540.4 715.4L555.2 711.7L562.6 715.4M546.0 722.8L562.6 720.9M549.6 728.3L577.4 722.8M555.2 735.7L581.0 724.6M503.5 685.8L514.6 678.4L521.9 685.8M510.9 693.2L521.9 700.6M485.0 676.6L496.1 671.0M558.9 607.3L558.9 628.6L568.1 630.4M551.5 607.3L551.5 636.0L542.3 636.0M341.0 399.5L341.0 433.6M336.5 433.6L352.7 433.6L353.6 447.1M310.4 440.8L336.5 440.8L349.1 438.1M310.4 448.9L323.9 448.9L327.5 441.7M350.0 493.0L370.7 481.3L392.2 466.9L413.8 452.5L431.8 436.3L449.7 423.8M350.0 495.7L377.8 479.5L395.8 468.7L419.2 454.3M279.0 488.5L305.9 485.8L329.3 488.5L349.1 493.0M279.0 501.0L293.4 499.2L313.1 502.8M304.2 502.8L304.2 510.0L312.2 510.0L312.2 519.0L322.1 520.8L329.3 531.6L329.3 536.1L356.3 537.0L388.6 537.9M388.6 495.7L388.6 515.4L419.2 515.4L421.9 502.8L440.8 503.7L440.8 495.7M394.0 502.8L395.8 486.7L422.8 486.7L422.8 479.5L449.7 479.5M406.6 488.5L424.6 502.8M422.8 477.7L422.8 502.8M431.8 511.8L431.8 537.9L490.0 537.0M447.9 499.2L490.0 499.2M447.9 499.2L447.9 537.9M467.7 459.7L490.0 520.8M467.7 499.2L467.7 517.2L490.0 517.2M406.6 537.9L406.6 555.0L388.6 555.0L388.6 580.0M406.6 555.0L439.0 555.0L439.0 580.0M460.5 553.2L490.0 553.2M460.5 553.2L460.5 580.0M447.9 555.0L447.9 580.0M386.8 450.7L449.7 450.7M356.3 451.6L356.3 481.3L367.1 510.0L363.5 520.8M323.9 538.8L325.7 556.8L345.5 560.4M345.5 538.8L341.0 553.2L347.3 565.8L347.3 580.0M359.9 553.2L377.8 553.2L379.6 567.5L363.5 567.5L359.9 553.2M363.5 510.0L385.0 520.8L388.6 538.8M469.5 409.4L469.5 459.7M433.6 409.4L433.6 441.7M458.7 423.8L458.7 459.7M490.0 420.2L471.3 422.0M358.1 399.5L363.5 411.2L383.2 413.0L385.0 399.5M367.1 413.0L367.1 436.3M385.0 413.0L395.8 413.0L404.8 399.5M383.2 413.0L374.2 418.4L377.8 436.3M345.5 416.6L367.1 414.8L385.0 416.6M395.8 413.0L426.4 409.4M353.6 417.5L353.6 433.6M310.4 456.1L356.3 454.3M363.5 448.9L386.8 452.5M377.8 439.9L386.8 439.9L395.8 450.7M395.8 450.7L403.0 459.7L406.6 470.5M311.3 470.5L356.3 474.1M313.1 472.3L323.9 479.5L332.9 475.9L345.5 481.3M297.0 479.5L305.9 477.7L313.1 484.9M282.6 493.9L297.0 492.1L305.9 495.7M318.5 495.7L323.9 506.4L318.5 513.6M329.3 502.8L338.3 510.0L334.7 520.8M341.0 504.6L347.3 520.8M305.9 477.7L302.4 495.7M311.3 466.9L329.3 461.5L345.5 447.1L367.1 436.3L381.4 439.9M395.8 434.5L406.6 422.0L419.2 423.8L431.8 413.0L449.7 409.4M406.6 463.3L431.8 457.9L449.7 463.3L458.7 459.7M367.1 466.9L381.4 470.5L395.8 463.3M370.7 495.7L381.4 492.1L392.2 502.8M449.7 479.5L456.9 474.1L465.9 477.7L467.7 484.9M424.6 488.5L440.8 492.1L449.7 488.5M473.1 474.1L490.0 474.1M482.1 430.9L490.0 430.9M471.3 443.5L490.0 445.3M480.3 501.0L480.3 537.0M417.4 427.4L422.8 441.7M440.8 425.6L449.7 439.9L458.7 448.9M395.8 481.3L406.6 477.7M346.7 579.6L388.2 579.6L388.2 588.9L404.8 588.9L404.8 619.3M382.7 656.3L456.6 657.2L456.6 648.9M399.3 631.3L404.8 631.3L404.8 639.7L412.2 639.7L412.2 631.3L428.9 631.3L430.7 639.7L439.9 639.7L447.3 643.3L447.3 648.9L456.6 648.9M404.8 606.4L414.1 606.4L417.8 604.6L421.5 611.9L417.8 619.3L412.2 623.0L417.8 630.4M421.5 617.5L425.2 610.1L460.3 643.3L456.6 648.9M419.6 613.8L458.4 645.2M425.2 621.2L447.3 634.1M456.6 657.2L462.1 652.6L473.2 648.9L489.8 661.8M460.3 658.1L464.0 665.5L473.2 665.5L478.7 663.7M471.3 674.7L478.7 667.4L482.4 674.7L484.3 685.8L490.0 693.2M462.1 700.6L473.2 702.5L478.7 700.6L490.0 693.2M462.1 700.6L464.0 715.4L454.7 719.1L449.2 728.3M486.1 739.4L490.0 735.7M489.4 744.9L489.4 755.1M403.0 593.5L417.8 593.5L417.8 602.7M428.9 575.0L430.7 586.1L436.2 589.8L438.1 593.5L427.0 597.2L421.5 604.6M430.7 599.0L445.5 599.0L449.2 593.5L447.3 586.1L445.5 578.7M454.7 575.0L454.7 593.5L465.8 595.3L475.0 593.5L480.6 606.4L490.0 608.2M460.3 582.4L478.7 582.4L490.0 580.5M404.8 578.7L412.2 578.7L414.1 575.0M393.8 575.0L391.9 586.1L399.3 586.1M464.0 624.9L473.2 643.3M465.8 623.0L490.0 624.9M473.2 613.8L490.0 613.8M447.3 610.1L452.9 615.6L464.0 623.0M482.4 632.3L490.0 632.3M482.4 645.2L490.0 645.2M475.0 652.6L482.4 656.3L486.1 661.8M473.2 658.1L490.0 671.1M478.7 575.0L478.7 595.3M484.3 586.1L484.3 611.9M800.0 485.5L829.1 506.4M800.0 481.9L827.9 481.4L858.3 499.6L887.4 520.2L902.0 531.2L936.0 555.5L955.5 565.2L982.2 578.5L1006.5 591.9L1013.8 599.2L1042.9 606.5L1100.0 608.9M894.7 447.4L906.9 455.9L916.6 458.3L954.3 478.9M954.3 478.9L988.3 478.9L989.5 497.2L1005.3 504.5L1006.5 521.5L1022.3 522.7L1023.5 532.4L1032.0 532.4L1033.2 539.7L1040.5 540.9L1041.7 548.2L1057.5 548.2M954.3 494.7L970.0 488.7L971.3 516.6L976.1 516.6L976.1 531.2L996.8 531.2L998.0 505.7M954.3 504.5L954.3 532.4L961.5 533.6L962.8 539.7L988.3 539.7L989.5 555.5L1012.6 556.7L1013.8 570.0L1007.7 572.5M893.5 447.4L893.5 505.7L954.3 505.7M903.2 505.7L903.2 557.9L902.0 650.0M877.7 403.6L877.7 429.1L885.0 430.4L883.8 443.7L877.7 453.4L886.2 455.9L886.2 461.9L893.5 463.2M860.7 403.6L860.7 444.9L835.2 444.9M800.0 427.9L814.6 426.7L830.4 424.3L847.4 421.9L848.6 404.9M800.0 454.7L808.5 454.7L808.5 444.9L835.2 444.9L835.2 455.9M817.0 480.2L817.0 463.2L820.6 464.4L831.6 470.4L835.2 466.8L835.2 455.9M800.0 497.2L814.6 497.2L829.1 506.9L849.8 505.7L851.0 514.2L800.0 514.2M800.0 522.7L821.9 523.9L916.6 523.9L916.6 531.2L886.2 531.2M824.3 526.3L824.3 555.5L848.6 556.7L849.8 650.0M800.0 573.7L815.8 573.7L815.8 607.7M800.0 607.7L849.8 607.7M855.9 650.0L858.3 627.1L865.6 627.1M875.3 555.5L875.3 650.0M875.3 590.7L902.0 590.7M926.3 556.7L926.3 650.0M902.0 556.7L936.0 556.7L936.0 574.9L955.5 574.9M945.7 600.4L945.7 650.0M956.7 574.9L956.7 616.2L945.7 616.2M970.0 596.8L971.3 650.0M987.0 599.2L987.0 650.0M1006.5 599.2L1006.5 633.2L1013.8 633.2M955.5 599.2L1063.6 599.2L1063.6 616.2L1013.8 617.4M1013.8 582.2L1023.5 589.5L1040.5 590.7L1040.5 582.2L1063.6 582.2L1063.6 599.2M1021.1 556.7L1056.3 556.7M855.9 464.4L855.9 548.2M868.0 482.6L868.0 526.3M886.2 487.4L886.2 519.0M863.2 545.7L872.9 548.2L885.0 555.5L872.9 560.3L866.8 565.2M954.3 532.4L954.3 582.2L970.0 584.6L971.3 596.8M981.0 577.3L970.0 594.3M1030.8 616.2L1045.3 627.1L1052.6 642.9M1050.2 616.2L1057.5 633.2L1072.1 642.9M855.9 487.4L885.0 488.7M855.9 506.9L877.7 506.9M858.3 531.2L882.6 531.2M909.3 565.2L921.5 570.0L914.2 579.8L926.3 584.6M906.9 594.3L926.3 594.3M967.6 570.0L974.9 579.8L965.2 584.6M989.5 570.0L1004.0 567.6M800.0 443.7L808.5 444.9M842.5 404.9L851.0 434.0L860.7 436.4M989.5 584.6L994.3 599.2M1001.6 584.6L1008.9 601.6M415.7 534.2L420.6 536.2L425.7 538.6M424.5 524.4L423.4 525.2M424.5 524.4L430.6 522.6M423.4 525.2L424.1 531.0L426.1 534.9M426.1 534.9L431.0 531.5L436.3 530.6M430.6 522.6L435.5 523.6M438.9 526.6L435.5 523.6M419.3 511.2L421.5 517.8L424.5 524.4M419.3 511.2L422.7 508.1L426.9 507.4M426.9 507.4L429.9 514.0L430.6 522.6M425.7 538.6L426.1 534.9M458.4 461.7L464.4 464.0M458.4 461.7L453.1 465.7M464.4 464.0L460.0 467.3L454.2 471.1M454.2 471.1L454.1 470.9M453.1 465.7L454.1 470.9M458.4 461.7L452.7 456.4M452.7 456.4L449.9 462.7M453.1 465.7L449.9 462.7M327.7 430.3L325.9 424.5L324.3 417.7M327.7 430.3L318.3 426.3L311.8 422.4M324.3 417.7L319.9 415.9M291.1 476.8L287.0 475.0L283.2 473.7M291.1 476.8L288.8 469.5L289.4 465.0M289.4 465.0L281.9 464.3M283.2 473.7L280.0 470.0M291.5 485.4L293.7 485.5M291.5 485.4L287.3 479.4L283.2 473.7M293.7 485.5L291.9 480.0L291.1 476.8M299.9 479.7L305.8 473.9L312.5 467.1M299.9 479.7L299.0 472.6M299.0 472.6L306.3 470.4L311.6 466.6M312.5 467.1L311.6 466.6M293.7 485.5L294.6 485.8M294.6 485.8L299.7 484.3M299.7 484.3L299.9 479.7M293.1 464.4L294.6 468.0L299.0 472.6M293.1 464.4L289.4 465.0M293.1 464.4L293.6 464.0M293.6 464.0L301.0 464.2L308.5 462.6M308.5 462.6L311.6 466.6M416.2 448.3L415.8 445.1L415.0 440.1M416.2 448.3L411.2 449.4M402.5 444.3L407.4 445.6L411.2 449.4M402.5 444.3L402.6 443.5M415.0 440.1L412.7 437.9L407.5 435.3M402.6 443.5L405.4 438.7L407.5 435.3M415.0 440.1L416.4 437.2L415.3 431.2M407.5 435.3L408.1 433.3M415.3 431.2L408.1 433.3M402.6 443.5L400.4 437.0L399.2 430.6M399.2 430.6L406.2 431.6M406.2 431.6L408.1 433.3M420.2 421.6L420.2 424.4M420.2 421.6L419.7 419.6M420.2 424.4L416.5 428.6L415.3 431.2M406.2 431.6L408.0 424.9L408.8 419.8M408.8 419.8L415.3 419.8L419.7 419.6M398.1 429.5L399.2 430.6M398.1 429.5L398.7 422.5M408.8 419.8L407.2 419.4M398.7 422.5L404.2 421.9L407.2 419.4M366.2 532.7L372.0 532.6L380.2 534.1M366.2 532.7L368.1 540.0M378.7 540.0L380.2 534.1M336.2 520.3L340.2 522.9M340.2 522.9L341.3 527.2L340.3 534.4M454.1 470.9L453.3 470.6M449.9 462.7L446.1 464.5M453.3 470.6L448.6 468.8L446.1 464.5M454.2 471.1L454.9 480.2L453.7 490.7M448.8 487.6L453.7 490.7M448.8 487.6L444.2 476.4L440.7 468.0M453.3 470.6L445.9 467.8L440.7 468.0M446.1 464.5L442.2 465.4M440.7 468.0L440.3 467.4M440.3 467.4L442.2 465.4M427.8 506.2L430.4 503.7M427.8 506.2L418.9 502.2L409.4 497.7M430.4 503.7L427.5 497.8M409.4 497.7L417.4 498.7L427.5 497.8M419.3 511.2L416.6 511.1M426.9 507.4L427.8 506.2M407.3 497.2L411.9 504.5L416.6 511.1M407.3 497.2L409.4 497.7M438.3 513.9L435.6 507.9L431.9 503.7M438.3 513.9L445.2 511.4L450.4 509.4M431.9 503.7L443.8 497.2L455.6 493.0M459.9 495.2L455.6 493.0M435.5 523.6L436.2 518.6L438.3 513.9M430.4 503.7L431.9 503.7M435.1 484.8L431.6 486.2L426.7 487.9M435.1 484.8L442.1 486.9L448.8 487.6M426.7 487.9L426.8 491.4L427.5 497.8M453.7 490.7L455.6 493.0M467.9 463.9L464.4 464.0M294.6 485.8L293.8 494.6L292.6 500.8M299.7 484.3L306.7 486.6M306.7 486.6L304.7 494.2M304.7 494.2L297.3 497.4L292.6 500.8M347.8 487.2L346.9 481.7L345.0 476.3M347.8 487.2L342.0 485.8L338.6 484.2M338.6 484.2L340.5 479.0L345.0 476.3M319.4 499.9L325.3 494.9M319.4 499.9L315.4 494.8L312.4 491.7M325.3 494.9L318.7 491.2L312.0 484.9M312.4 491.7L310.0 486.4M310.0 486.4L312.0 484.9M331.6 492.2L325.3 494.9M331.6 492.2L326.3 489.0L322.6 482.8M322.6 482.8L315.2 481.7M315.2 481.7L312.0 484.9M306.7 486.6L310.0 486.4M315.2 481.7L315.0 476.4L315.7 469.1M312.5 467.1L314.9 468.3M314.9 468.3L315.7 469.1M335.6 513.2L331.2 511.4L326.7 508.0M335.6 513.2L340.6 510.5L343.3 505.7M326.7 508.0L329.2 502.3L333.8 494.2M333.8 494.2L336.5 497.0L341.6 498.3M343.3 505.7L341.6 498.3M332.2 492.3L333.8 494.2M332.2 492.3L332.8 487.9L336.2 484.7M336.2 484.7L338.6 484.2M347.8 487.2L350.5 490.2M341.6 498.3L344.9 494.6L350.5 490.2M306.1 435.5L306.1 435.5M306.1 435.5L303.8 428.9M288.1 445.7L292.7 445.3L298.5 444.4M306.1 435.5L301.4 439.7L298.5 444.4M308.5 462.6L308.1 456.2M314.9 468.3L318.4 461.1L319.6 453.3M319.6 453.3L315.0 453.5L310.6 452.3M308.1 456.2L310.6 452.3M295.4 458.1L294.0 454.4L289.6 451.6M295.4 458.1L298.6 453.5M289.6 451.6L292.7 450.5L298.1 451.0M298.6 453.5L298.1 451.0M293.6 464.0L295.4 458.1M286.6 450.1L289.6 451.6M308.1 456.2L302.3 454.6L298.6 453.5M298.5 444.4L298.1 451.0M306.1 435.5L308.3 442.5M308.3 442.5L310.2 448.2L310.6 452.3M329.4 432.4L327.7 430.3M329.4 432.4L331.8 425.9L336.5 421.5M324.3 417.7L329.8 418.6L336.2 417.4M336.5 421.5L336.2 417.4M327.5 409.7L333.1 411.7L338.7 413.4M336.2 417.4L338.7 413.4M343.7 427.9L347.1 423.3L351.7 418.4M343.7 427.9L340.4 424.2L336.5 421.5M340.6 411.4L345.1 414.0L349.0 415.1M340.6 411.4L338.7 413.4M349.0 415.1L351.7 418.4M361.8 443.4L355.8 440.4L350.7 437.7M361.8 443.4L363.2 437.0L366.7 432.1M350.7 437.7L352.9 429.0L357.9 423.0M366.7 432.1L362.5 429.8L360.7 425.1M357.9 423.0L360.7 425.1M346.5 438.1L350.7 437.7M346.5 438.1L345.8 433.3L343.7 427.9M357.6 421.6L351.7 418.4M357.6 421.6L357.9 423.0M419.7 419.6L421.6 415.8M421.6 415.8L420.6 412.8M407.2 419.4L405.1 411.5L401.2 405.6M401.2 405.6L408.3 407.9L416.3 409.7M420.6 412.8L416.3 409.7M409.4 402.0L413.4 405.2L415.3 408.2M415.3 408.2L413.3 402.0M398.7 422.5L395.7 420.7M401.2 405.6L398.1 402.0M395.7 420.7L395.5 410.0L397.6 402.0M415.3 408.2L416.3 409.7M355.8 538.3L355.4 540.0M355.8 538.3L352.0 532.9L350.9 525.9M350.6 540.0L351.6 532.6L350.2 527.2M350.9 525.9L350.2 527.2M344.2 536.6L348.2 530.6L350.2 527.2M340.2 522.9L346.7 523.5L351.2 522.9M351.2 522.9L350.9 525.9M366.2 532.7L364.5 529.4M355.8 538.3L359.3 533.7L362.9 529.2M362.9 529.2L364.5 529.4M351.2 522.9L352.6 521.9M352.6 521.9L354.5 521.7M362.9 529.2L357.9 526.7L354.5 521.7M345.4 506.5L349.5 501.0L354.9 496.9M345.4 506.5L343.3 505.7M350.5 490.2L351.7 490.1M354.9 496.9L351.7 490.1M352.1 477.4L345.3 474.6M352.1 477.4L354.8 482.6L355.8 487.4M345.3 474.6L345.0 476.3M351.7 490.1L355.8 487.4M357.9 473.7L357.3 473.8M357.9 473.7L358.5 480.5L359.0 486.9M357.3 473.8L352.1 477.4M355.8 487.4L359.0 486.9M365.8 468.0L371.0 473.0M365.8 468.0L360.7 469.7L357.9 473.7M371.0 473.0L369.2 479.9L364.6 485.6M364.6 485.6L360.8 487.0M359.0 486.9L360.8 487.0M371.0 473.0L376.3 473.6M376.3 473.6L378.8 476.0M364.6 485.6L368.5 488.3M368.5 488.3L374.2 488.6L379.2 488.5M379.2 488.5L379.9 481.2M378.8 476.0L379.9 481.2M376.3 473.6L378.0 471.0M392.4 463.8L384.4 466.4L378.0 471.0M392.4 463.8L396.7 467.1M396.7 467.1L392.8 469.9L388.4 475.7M378.8 476.0L382.2 475.4L388.4 475.7M407.3 497.2L406.4 496.6M419.4 484.8L426.7 487.9M419.4 484.8L413.9 491.0L407.9 494.6M407.9 494.6L406.4 496.6M396.7 467.1L398.9 467.4M398.9 467.4L401.7 474.7M388.4 475.7L391.7 480.2L395.2 485.9M401.7 474.7L399.9 479.7L395.2 485.9M379.9 481.2L387.5 483.9L395.2 486.7M395.2 486.7L395.2 485.9M415.0 513.1L410.3 516.5M415.0 513.1L416.1 518.3L419.8 525.9M410.3 516.5L411.5 523.0L415.7 527.7M419.8 525.9L415.7 527.7M423.4 525.2L419.8 525.9M416.6 511.1L415.0 513.1M415.7 534.2L413.3 530.3M413.3 530.3L415.7 527.7M403.4 540.0L403.4 539.8M413.3 530.3L409.1 531.2M403.4 539.8L405.9 536.0L409.1 531.2M420.2 421.6L427.1 424.0L434.4 426.5M421.6 415.8L424.4 415.2M434.4 426.5L436.4 422.0L436.2 418.1M424.4 415.2L429.1 417.1L436.2 418.1M467.1 457.1L458.5 455.6L452.7 453.9M452.7 456.4L452.3 454.1M452.7 453.9L452.3 454.1M442.2 465.4L442.3 460.5L443.2 456.1M452.3 454.1L451.7 453.7M443.2 456.1L448.2 455.9L451.7 453.7M416.2 448.3L419.5 448.9M420.2 424.4L425.8 431.8L428.5 437.6M428.5 437.6L426.3 443.9L422.1 447.6M422.1 447.6L419.5 448.9M428.5 437.6L433.3 437.2M434.4 426.5L436.9 428.9M433.3 437.2L434.7 432.5L436.9 428.9M411.2 449.4L407.6 453.9L406.9 458.8M419.5 448.9L419.7 453.4L422.5 459.6M422.5 459.6L418.2 461.9L414.3 464.7M414.3 464.7L411.4 461.6L406.9 458.8M415.4 470.4L414.1 469.3M415.4 470.4L415.7 473.3L414.8 478.9M414.8 478.9L411.2 478.6L406.3 476.7M406.3 476.7L408.3 472.6L413.2 469.5M413.2 469.5L414.1 469.3M419.4 484.8L419.4 484.7M419.4 484.7L414.8 478.9M407.9 494.6L407.3 484.5L405.9 476.7M405.9 476.7L406.3 476.7M398.9 467.4L400.0 466.5M405.9 476.7L401.7 474.7M400.0 466.5L407.5 469.4L413.2 469.5M414.3 464.7L414.1 469.3M406.9 458.8L403.3 461.6M400.0 466.5L403.3 461.6M388.1 456.2L384.7 458.1L379.6 459.4M388.1 456.2L389.2 458.6M389.2 458.6L384.8 464.8L378.7 468.4M379.6 459.4L380.5 463.4L378.7 468.4M388.7 451.9L388.1 456.2M388.7 451.9L382.2 449.1L374.9 448.8M374.9 448.8L376.7 451.8L376.1 457.5M376.1 457.5L379.6 459.4M392.4 463.8L389.2 458.6M378.0 471.0L378.7 468.4M304.7 494.2L303.2 502.7L302.9 510.8M292.6 500.8L291.5 505.9M302.9 510.8L301.6 511.8M312.4 491.7L309.2 500.2L307.7 509.3M302.9 510.8L307.7 509.3M319.4 499.9L318.8 504.5L319.0 508.0M307.7 509.3L313.4 509.6L319.0 508.0M332.2 492.3L331.6 492.2M326.7 508.0L319.1 508.1M319.0 508.0L319.1 508.1M319.6 453.3L319.7 453.2M308.3 442.5L313.3 445.9L317.6 448.0M319.7 453.2L317.6 448.0M306.1 435.5L310.8 437.4L318.4 438.3M317.6 448.0L319.2 442.0L318.4 438.3M329.4 432.4L329.5 434.1M329.5 434.1L323.9 437.8M323.9 437.8L320.8 438.6M318.4 438.3L320.8 438.6M365.8 468.0L365.0 465.8M376.1 457.5L371.9 461.3L366.1 463.3M365.0 465.8L366.1 463.3M374.4 448.3L369.1 446.0M374.4 448.3L374.9 448.8M369.1 446.0L366.5 446.1M366.1 463.3L365.1 455.0L366.5 446.1M394.3 420.6L390.8 410.9L388.3 402.0M394.3 420.6L395.7 420.7M394.3 420.6L390.3 420.7M386.8 402.0L385.4 408.7M390.3 420.7L389.3 414.9L385.4 408.7M359.5 419.8L361.9 414.5M359.5 419.8L365.6 420.7L371.7 419.8M361.9 414.5L365.5 412.2L369.7 412.1M371.7 419.8L371.6 413.8M369.7 412.1L371.6 413.8M372.8 423.8L368.2 423.5L360.7 425.1M372.8 423.8L372.7 421.2M372.7 421.2L371.7 419.8M357.6 421.6L359.5 419.8M353.8 409.6L360.9 410.8M353.8 409.6L355.5 402.0M360.9 410.8L363.1 407.8L362.9 402.0M349.0 415.1L353.8 409.6M361.9 414.5L360.9 410.8M369.7 412.1L369.1 405.9L368.7 402.0M374.2 413.0L377.5 407.6L381.0 402.0M374.2 413.0L371.6 413.8M398.1 429.5L394.8 431.4M402.5 444.3L396.8 445.5M394.8 431.4L395.2 437.3L393.8 440.3M393.8 440.3L396.8 445.5M403.3 461.6L397.6 453.7L393.5 448.5M396.8 445.5L393.5 448.5M388.7 451.9L389.9 450.3M393.5 448.5L389.9 450.3M374.4 448.3L379.7 443.4L382.0 441.5M382.0 441.5L385.6 443.8M389.9 450.3L385.6 443.8M374.1 427.9L371.8 430.2M374.1 427.9L378.5 428.8M378.5 428.8L379.0 434.6L376.8 438.1M371.8 430.2L374.5 434.1L374.8 438.6M374.8 438.6L376.8 438.1M372.8 423.8L374.1 427.9M366.7 432.1L371.8 430.2M369.1 446.0L371.1 442.6L374.8 438.6M361.8 443.4L362.0 443.6M366.5 446.1L362.0 443.6M382.0 441.5L381.2 438.5M381.2 438.5L376.8 438.1M382.1 437.2L381.9 433.6L382.2 428.8M382.1 437.2L388.4 437.4M388.4 437.4L388.5 437.3M388.5 437.3L389.0 431.4M389.0 431.4L384.1 427.7M384.1 427.7L382.2 428.8M381.2 438.5L382.1 437.2M378.5 428.8L382.2 428.8M385.6 443.8L388.4 437.4M393.8 440.3L388.5 437.3M394.8 431.4L389.0 431.4M390.3 420.7L385.6 423.7M385.6 423.7L384.1 427.7M410.3 516.5L404.5 516.1L400.5 516.0M409.1 531.2L406.6 527.7L401.7 523.7M401.7 523.7L400.5 516.0M359.7 513.4L354.6 511.1L347.0 507.3M359.7 513.4L359.7 509.2L361.9 504.2M359.2 503.4L361.9 504.2M359.2 503.4L352.1 504.1L347.0 507.3M347.0 507.3L347.0 507.3M352.6 521.9L350.1 513.1L347.0 507.3M354.5 521.7L359.6 516.6M359.6 516.6L359.7 513.4M364.9 503.1L361.5 494.7L360.8 487.0M364.9 503.1L361.9 504.2M354.9 496.9L359.2 503.4M345.4 506.5L347.0 507.3M336.2 520.3L335.7 519.5M335.7 519.5L335.6 513.2M379.2 488.5L379.8 489.7M395.2 486.7L396.0 491.2M379.8 489.7L387.0 490.9L396.0 491.2M420.6 412.8L420.6 406.6L421.8 402.0M443.2 456.1L441.8 455.0M451.7 453.7L450.0 448.8M441.6 451.2L441.8 455.0M441.6 451.2L447.8 447.4M447.8 447.4L450.0 448.8M452.7 453.9L459.3 449.5L465.5 445.0M450.0 448.8L454.2 445.5L456.4 440.2M465.0 441.2L462.0 439.5L456.4 440.2M435.1 484.8L432.5 481.6L432.5 476.9M440.3 467.4L439.7 467.4M439.7 467.4L438.8 467.9M432.5 476.9L435.3 471.1L438.8 467.9M424.1 461.4L425.9 461.5M424.1 461.4L423.8 465.3L423.4 470.4M425.9 461.5L428.2 465.4L432.3 468.3M432.3 468.3L429.7 469.9L425.6 472.8M423.4 470.4L425.1 472.8M425.1 472.8L425.6 472.8M422.5 459.6L424.1 461.4M415.4 470.4L423.4 470.4M432.5 476.9L425.6 472.8M438.8 467.9L432.3 468.3M419.4 484.7L422.7 477.9L425.1 472.8M438.6 455.0L433.1 451.9M438.6 455.0L434.9 461.6M433.1 460.7L434.9 461.6M433.1 460.7L432.9 452.9M432.9 452.9L433.1 451.9M432.9 451.4L433.1 451.9M432.9 451.4L438.5 445.9M438.5 445.9L441.6 451.2M441.8 455.0L438.6 455.0M439.7 467.4L434.9 461.6M426.5 461.3L425.9 461.5M426.5 461.3L433.1 460.7M426.5 461.3L430.9 456.8L432.9 452.9M422.1 447.6L427.4 448.5L432.9 451.4M439.1 443.9L436.9 439.2M439.1 443.9L445.7 444.8M436.9 439.2L440.5 436.7L444.3 435.6M445.7 444.8L448.2 439.4M444.3 435.6L448.2 439.4M438.5 445.9L439.1 443.9M433.3 437.2L436.9 439.2M447.8 447.4L445.7 444.8M454.3 438.8L456.4 440.2M454.3 438.8L448.2 439.4M436.9 428.9L439.6 427.6M444.3 435.6L446.1 430.2M439.6 427.6L446.1 430.2M436.2 418.1L440.8 418.0M439.6 427.6L441.0 421.7L440.8 418.0M329.2 520.7L325.0 525.4M329.2 520.7L325.0 518.7L320.5 517.2M320.5 517.2L318.4 521.6M335.7 519.5L329.2 520.7M319.1 508.1L321.1 513.1L320.5 517.2M326.9 444.3L323.9 437.8M326.9 444.3L327.1 446.8M320.8 438.6L321.7 443.7L322.2 451.0M327.1 446.8L322.2 451.0M319.7 453.2L321.7 452.9M322.2 451.0L321.7 452.9M321.1 467.8L323.0 466.3M321.1 467.8L324.8 472.3L330.9 476.1M323.0 466.3L329.7 464.1M329.7 464.1L331.9 468.8L331.6 476.1M330.9 476.1L331.6 476.1M315.7 469.1L321.1 467.8M323.5 454.1L321.7 452.9M323.5 454.1L323.0 459.8L323.0 466.3M322.6 482.8L325.3 479.8L330.9 476.1M336.2 484.7L334.5 480.5L333.1 476.3M333.1 476.3L331.6 476.1M377.8 419.3L377.4 414.0M377.8 419.3L381.7 419.4M381.7 419.4L382.2 413.1M377.4 414.0L382.2 413.1M372.7 421.2L377.8 419.3M374.2 413.0L377.4 414.0M385.6 423.7L381.7 419.4M385.4 408.7L382.2 413.1M391.6 540.0L390.3 532.7M403.4 539.8L399.3 536.1M399.3 536.1L395.8 534.8L390.3 532.7M366.9 503.2L364.9 503.1M366.9 503.2L368.9 507.6L372.6 509.3M359.6 516.6L365.7 517.3M365.7 517.3L370.4 513.8L372.6 509.3M379.2 492.6L380.7 498.4M379.2 492.6L373.8 494.9L370.6 496.4M369.0 500.7L370.6 496.4M369.0 500.7L372.8 499.3L379.5 499.1M379.5 499.1L380.7 498.4M368.5 488.3L369.3 492.2L370.6 496.4M379.8 489.7L379.2 492.6M366.9 503.2L369.0 500.7M372.6 509.3L374.0 509.8M374.0 509.8L377.6 504.6L379.5 499.1M385.5 501.5L380.7 498.4M385.5 501.5L380.7 505.8L375.0 510.4M375.0 510.4L374.0 509.8M388.1 507.2L386.2 501.7M388.1 507.2L394.2 509.2L398.8 513.1M386.2 501.7L392.7 498.0L396.8 492.4M398.8 513.1L403.5 506.3L405.6 496.8M405.6 496.8L402.1 493.9L396.8 492.4M385.5 501.5L386.2 501.7M379.4 515.7L375.0 510.4M379.4 515.7L385.0 512.4L388.1 507.2M396.0 491.2L396.8 492.4M406.4 496.6L405.6 496.8M400.5 516.0L398.9 514.1M398.9 514.1L398.8 513.1M424.4 415.2L428.9 411.4M428.9 411.4L430.0 405.5L431.2 402.0M458.9 416.1L461.4 412.6M458.9 416.1L458.2 423.6M458.2 423.6L463.0 425.4M442.3 415.7L441.0 417.9M442.3 415.7L448.5 415.1M441.0 417.9L446.4 422.5M446.4 422.5L451.2 420.6M448.5 415.1L451.6 418.1M451.6 418.1L451.2 420.6M441.3 408.9L442.3 415.7M441.3 408.9L449.2 406.5L454.2 406.0M454.2 406.0L450.4 410.7L448.5 415.1M446.1 430.2L447.6 429.4M440.8 418.0L441.0 417.9M447.6 429.4L446.4 422.5M458.9 416.1L451.6 418.1M459.7 402.0L454.2 406.0M329.5 434.1L336.7 436.9L341.7 441.1M326.9 444.3L332.0 446.3L338.9 446.6M338.9 446.6L341.7 441.1M346.5 438.1L342.4 440.9M341.7 441.1L342.4 440.9M345.3 474.6L344.8 473.5M333.1 476.3L335.4 474.6M344.8 473.5L340.3 474.3L335.4 474.6M400.9 524.4L394.5 528.0L387.6 529.9M400.9 524.4L397.9 530.4M397.9 530.4L394.3 530.0L388.9 531.0M387.6 529.9L388.9 531.0M401.7 523.7L400.9 524.4M399.3 536.1L397.9 530.4M390.3 532.7L388.9 531.0M380.2 534.1L382.6 527.7M382.6 527.7L387.6 529.9M380.7 521.3L373.8 522.1L367.8 520.0M380.7 521.3L382.1 523.7M382.0 526.1L382.1 523.7M382.0 526.1L374.8 527.5L365.5 528.6M365.5 528.6L366.1 525.5L367.8 520.0M379.4 515.7L380.7 521.3M365.7 517.3L367.8 520.0M398.9 514.1L389.9 518.8L382.1 523.7M382.6 527.7L382.0 526.1M364.5 529.4L365.5 528.6M434.4 408.5L433.4 402.0M434.4 408.5L440.4 407.7M433.9 402.0L437.4 405.4L440.4 407.2M440.4 407.7L440.4 407.2M428.9 411.4L434.4 408.5M441.3 408.9L440.4 407.7M458.0 430.6L456.0 425.0M458.0 430.6L452.8 433.2M452.8 433.2L449.3 429.5M449.3 429.5L454.1 425.2M456.0 425.0L454.1 425.2M458.2 423.6L456.0 425.0M464.1 433.8L458.0 430.6M454.3 438.8L452.8 433.2M447.6 429.4L449.3 429.5M451.2 420.6L454.1 425.2M348.3 449.8L349.6 454.9L349.7 458.8M348.3 449.8L351.5 450.3L356.5 451.7M349.7 458.8L353.7 456.0L356.2 452.7M356.5 451.7L356.2 452.7M362.0 443.6L360.5 446.4L356.5 451.7M342.4 440.9L346.8 445.3L348.3 449.8M365.0 465.8L364.5 465.6M364.5 465.6L359.7 457.9L356.2 452.7M357.3 473.8L351.3 472.5L348.0 468.2M364.5 465.6L358.8 465.8L351.3 463.2M348.0 468.2L351.3 463.2M349.7 458.8L349.7 458.9M351.3 463.2L349.7 458.9M344.8 473.5L345.4 471.1M348.0 468.2L347.3 468.8M345.4 471.1L347.3 468.8M349.7 458.9L345.6 457.9M347.3 468.8L345.0 464.8L340.5 461.1M345.6 457.9L340.5 461.1M338.9 446.6L338.1 448.5M345.6 457.9L340.9 453.3L338.1 448.5M327.1 446.8L330.4 448.0L335.3 451.1M323.5 454.1L328.1 455.0L332.5 455.5M335.3 451.1L332.5 455.5M335.3 451.1L338.1 448.5M335.1 466.9L338.5 465.6M335.1 466.9L330.0 463.9M338.5 465.6L339.4 461.4M339.4 461.4L337.4 459.6L332.6 456.1M330.0 463.9L329.8 459.0L332.6 456.1M335.4 474.6L335.1 466.9M345.4 471.1L342.1 469.0L338.5 465.6M329.7 464.1L330.0 463.9M340.5 461.1L339.4 461.4M332.5 455.5L332.6 456.1M450.0 442.9L450.0 426.3L483.1 426.3M484.1 424.2L483.1 424.2L483.1 426.3M450.0 453.2L450.0 458.8L485.0 458.8M485.0 458.8L485.0 438.0L495.8 438.0M483.1 426.3L483.1 438.0L495.8 438.0M485.0 458.8L485.0 465.9L496.9 465.9M496.9 465.9L500.6 465.9L500.6 464.8M500.6 464.8L500.6 458.5L508.3 458.5M495.8 438.0L510.8 438.0L510.8 444.4M508.3 458.5L508.3 444.4L510.8 444.4M633.2 600.0L638.5 600.0L638.5 590.6M643.3 590.5L638.5 590.5L638.5 590.6M511.1 420.9L511.1 423.6L484.6 423.6M511.1 420.9L505.9 420.9L505.9 412.2M505.9 412.2L488.7 412.2L488.7 416.1M484.6 423.6L484.6 416.1L488.7 416.1M492.3 404.0L488.7 404.0L488.7 416.1M506.9 404.0L505.9 404.0L505.9 412.2M484.1 424.2L484.6 424.2L484.6 423.6M510.8 444.4L510.8 444.3L510.9 444.3M511.1 420.9L511.1 424.8L520.5 424.8M510.9 444.3L510.9 424.8L520.5 424.8M610.1 462.3L600.0 462.3L600.0 454.8M610.1 462.3L613.5 462.3L613.5 472.6M600.0 454.8L600.0 475.3L601.6 475.3M613.5 472.6L601.6 472.6L601.6 475.3M635.7 470.2L635.7 474.1L621.5 474.1M635.7 470.2L635.7 502.4L629.5 502.4M621.5 474.1L621.5 493.0L617.1 493.0M629.5 502.4L617.1 502.4L617.1 493.0M643.3 590.5L635.3 590.5L635.3 577.6M635.3 577.6L650.0 577.6L650.0 577.9M650.0 526.9L650.0 524.1L625.7 524.1M642.2 553.6L650.0 553.6L650.0 554.5M642.2 553.6L619.0 553.6L619.0 535.3M619.0 535.3L619.0 526.2L622.9 526.2M622.9 526.2L625.7 526.2L625.7 524.1M450.0 501.9L466.0 501.9L466.0 507.2M450.0 460.3L460.2 460.3L460.2 468.5M460.2 468.5L460.2 500.4L476.3 500.4M476.3 500.4L466.0 500.4L466.0 507.2M496.9 465.9L489.3 465.9L489.3 481.7M500.6 464.8L512.0 464.8L512.0 484.7M512.0 484.7L512.0 481.7L489.3 481.7M460.2 468.5L487.7 468.5L487.7 483.5M489.3 481.7L487.7 481.7L487.7 483.5M545.4 487.2L545.4 489.4L524.5 489.4M545.4 487.2L545.4 468.2L532.3 468.2M532.3 468.2L532.3 470.4L526.3 470.4M526.3 470.4L519.5 470.4L519.5 487.7M519.5 487.7L519.5 489.4L524.5 489.4M508.3 458.5L526.3 458.5L526.3 470.4M512.0 484.7L512.0 489.1L517.1 489.1M519.5 487.7L519.5 489.1L517.1 489.1M610.1 462.3L622.4 462.3L622.4 452.7M600.0 454.8L600.0 448.5L594.9 448.5M594.9 448.5L594.9 445.2L611.4 445.2M611.4 445.2L622.4 445.2L622.4 452.7M614.4 589.1L621.4 589.1L621.4 586.5M614.4 589.1L614.4 581.4L606.3 581.4M606.3 581.4L606.3 561.6L623.5 561.6M621.4 586.5L630.7 586.5L630.7 575.2M630.7 575.2L632.0 575.2L632.0 569.4M632.0 569.4L632.0 565.4L630.2 565.4M630.2 565.4L623.5 565.4L623.5 561.6M614.9 600.0L614.9 589.1L614.4 589.1M638.5 590.6L638.5 586.5L621.4 586.5M583.0 600.0L582.9 600.0L582.9 580.4M590.7 574.2L606.3 574.2L606.3 581.4M590.7 574.2L589.9 574.2L589.9 574.2M582.9 580.4L583.2 580.4L583.2 579.6M583.2 579.6L583.2 574.4L589.0 574.4M589.9 574.2L589.0 574.2L589.0 574.4M635.3 577.6L635.3 575.2L630.7 575.2M650.0 570.2L632.0 570.2L632.0 569.4M642.2 553.6L642.2 565.4L630.2 565.4M590.7 574.2L590.7 565.1L598.5 565.1M623.5 561.6L616.9 561.6L616.9 545.9M616.9 545.9L616.9 565.1L598.5 565.1M619.0 535.3L619.0 535.5L618.9 535.5M616.9 545.9L618.9 545.9L618.9 535.5M483.9 596.1L489.8 596.1L489.8 587.1M516.6 600.0L516.6 596.8L516.3 596.8M516.3 596.8L489.8 596.8L489.8 587.1M583.2 579.6L583.2 573.5L558.8 573.5M589.0 574.4L589.0 546.6L569.3 546.6M569.3 546.6L567.4 546.6L567.4 545.9M547.8 560.8L547.8 545.9L567.4 545.9M547.8 560.8L556.4 560.8L556.4 571.8M556.4 571.8L556.4 573.5L558.8 573.5M591.3 556.7L591.3 536.0L590.5 536.0M591.3 556.7L598.6 556.7L598.6 546.8M598.6 546.8L602.5 546.8L602.5 536.7M602.5 536.7L602.5 535.8L590.7 535.8M590.7 535.8L590.7 536.0L590.5 536.0M589.9 574.2L589.9 556.7L591.3 556.7M569.3 546.6L590.5 546.6L590.5 536.0M598.5 565.1L598.5 546.8L598.6 546.8M618.9 535.5L602.5 535.5L602.5 536.7M584.9 521.1L607.0 521.1L607.0 515.2M584.9 521.1L590.7 521.1L590.7 535.8M607.0 515.2L622.9 515.2L622.9 526.2M545.8 498.9L555.7 498.9L555.7 503.6M545.8 498.9L546.2 498.9L546.2 487.6M555.7 503.6L555.7 494.9L569.4 494.9M546.2 487.6L553.6 487.6L553.6 483.3M553.6 483.3L553.6 486.0L568.8 486.0M568.8 486.0L568.8 494.9L569.4 494.9M545.4 487.2L546.2 487.2L546.2 487.6M524.5 489.4L538.4 489.4L538.4 506.0M538.4 506.0L545.8 506.0L545.8 498.9M499.0 504.5L496.8 504.5L496.8 496.9M499.0 504.5L499.0 511.9L488.2 511.9M496.8 496.9L487.5 496.9L487.5 491.5M487.5 491.5L487.5 500.1L477.5 500.1M477.5 500.1L477.5 511.9L488.2 511.9M487.7 483.5L487.5 483.5L487.5 491.5M517.1 489.1L516.9 489.1L516.9 489.5M516.9 489.5L516.9 496.9L496.8 496.9M476.3 500.4L477.5 500.4L477.5 500.1M516.9 489.5L517.1 489.5L517.1 498.1M535.0 514.2L538.4 514.2L538.4 506.0M535.0 514.2L525.5 514.2L525.5 511.9M525.5 511.9L517.1 511.9L517.1 498.1M499.0 504.5L504.8 504.5L504.8 511.3M517.1 498.1L504.8 498.1L504.8 511.3M532.3 468.2L540.0 468.2L540.0 459.4M510.9 444.3L510.9 448.8L529.7 448.8M529.7 448.8L529.7 459.4L540.0 459.4M597.3 404.0L597.3 411.6L594.6 411.6M626.8 404.0L628.0 404.0L628.0 410.2M594.6 411.6L596.1 411.6L596.1 419.8M596.1 419.8L618.7 419.8L618.7 431.0M618.7 431.0L618.7 429.6L625.3 429.6M628.0 410.2L625.3 410.2L625.3 429.6M525.5 511.9L525.5 517.9L514.1 517.9M504.8 511.3L505.8 511.3L505.8 517.5M514.1 517.9L505.8 517.9L505.8 517.5M466.0 507.2L466.0 508.1L466.3 508.1M488.2 511.9L488.2 527.8L490.6 527.8M490.6 527.8L490.6 508.1L466.3 508.1M496.2 529.2L505.8 529.2L505.8 517.5M496.2 529.2L492.1 529.2L492.1 530.7M490.6 527.8L492.1 527.8L492.1 530.7M607.7 500.0L603.4 500.0L603.4 508.2M607.7 500.0L610.0 500.0L610.0 492.7M600.8 489.1L600.8 505.4L598.6 505.4M600.8 489.1L608.1 489.1L608.1 491.3M603.4 508.2L603.4 505.4L598.6 505.4M610.0 492.7L610.0 491.3L608.1 491.3M607.0 515.2L607.0 508.2L603.4 508.2M625.7 524.1L628.0 524.1L628.0 510.9M628.0 510.9L628.0 500.0L607.7 500.0M629.9 503.3L629.5 503.3L629.5 502.4M629.9 503.3L628.0 503.3L628.0 510.9M617.1 493.0L610.0 493.0L610.0 492.7M583.2 519.7L589.0 519.7L589.0 504.1M583.2 519.7L584.9 519.7L584.9 521.1M589.0 504.1L598.6 504.1L598.6 505.4M613.7 472.7L608.1 472.7L608.1 491.3M613.7 472.7L613.7 474.1L621.5 474.1M589.1 495.9L598.7 495.9L598.7 487.6M589.1 495.9L589.1 482.1L578.5 482.1M598.7 487.6L596.0 487.6L596.0 478.8M596.0 478.8L596.0 475.6L588.7 475.6M578.5 482.1L578.5 475.6L588.7 475.6M587.5 501.3L589.0 501.3L589.0 504.1M587.5 501.3L589.1 501.3L589.1 495.9M600.8 489.1L600.8 487.6L598.7 487.6M571.0 483.6L568.8 483.6L568.8 486.0M571.0 483.6L578.5 483.6L578.5 482.1M572.0 498.5L569.4 498.5L569.4 494.9M572.0 498.5L572.0 501.3L587.5 501.3M613.5 472.6L613.5 472.7L613.7 472.7M601.6 475.3L596.0 475.3L596.0 478.8M516.3 596.8L516.3 584.2L523.1 584.2M523.1 584.2L533.5 584.2L533.5 600.0M578.6 583.1L578.6 596.6L552.9 596.6M578.6 583.1L565.2 583.1L565.2 600.0M552.9 596.6L552.9 600.0L549.8 600.0M582.9 580.4L582.9 583.1L578.6 583.1M558.8 573.5L552.9 573.5L552.9 596.6M556.4 571.8L556.4 589.5L542.0 589.5M542.0 589.5L542.0 600.0L548.7 600.0M583.2 519.7L583.2 519.5L580.6 519.5M567.4 545.9L567.0 545.9L567.0 545.0M580.6 519.5L580.6 536.1L566.8 536.1M567.0 545.0L567.0 536.1L566.8 536.1M546.5 404.0L546.5 412.7L546.3 412.7M523.2 404.0L525.6 404.0L525.6 413.1M546.3 412.7L525.6 412.7L525.6 413.1M520.5 424.8L520.5 424.2L521.5 424.2M525.6 413.1L521.5 413.1L521.5 424.2M529.7 448.8L535.6 448.8L535.6 435.7M535.6 435.7L535.6 431.6L535.3 431.6M521.5 424.2L535.3 424.2L535.3 431.6M571.3 416.4L565.4 416.4L565.4 424.7M571.3 416.4L571.3 406.4L564.0 406.4M565.4 424.7L565.4 416.8L548.5 416.8M564.0 406.4L564.0 413.9L547.6 413.9M547.6 413.9L548.5 413.9L548.5 416.8M564.0 404.0L564.0 404.0L564.0 406.4M594.6 411.6L571.3 411.6L571.3 416.4M546.3 412.7L547.6 412.7L547.6 413.9M545.0 426.5L545.0 430.6L538.6 430.6M545.0 426.5L548.5 426.5L548.5 416.8M535.3 431.6L535.3 430.6L538.6 430.6M594.9 448.5L590.3 448.5L590.3 447.0M588.7 475.6L584.8 475.6L584.8 452.8M584.8 452.8L590.3 452.8L590.3 447.0M545.0 426.5L558.4 426.5L558.4 437.9M565.4 424.7L565.5 424.7L565.5 429.4M565.5 429.4L565.5 437.9L558.4 437.9M596.1 419.8L589.6 419.8L589.6 442.1M565.5 429.4L565.5 442.1L589.6 442.1M611.4 445.2L611.4 431.0L618.7 431.0M590.3 447.0L590.3 442.1L589.6 442.1M633.1 435.9L642.7 435.9L642.7 420.9M633.1 435.9L633.1 457.2L647.6 457.2M649.6 458.7L649.6 457.2L647.6 457.2M649.6 458.7L649.6 458.7L650.0 458.7M628.0 410.2L628.0 420.9L642.7 420.9M625.3 429.6L625.3 435.9L633.1 435.9M622.4 452.7L647.6 452.7L647.6 457.2M635.7 470.2L635.7 458.7L649.6 458.7M629.9 503.3L629.9 497.6L650.0 497.6M488.4 565.6L479.3 565.6L479.3 558.4M488.4 565.6L488.4 545.6L495.8 545.6M479.3 558.4L478.8 558.4L478.8 537.5M495.8 545.6L490.8 545.6L490.8 532.9M490.8 532.9L490.8 537.5L478.8 537.5M492.1 530.7L492.1 532.9L490.8 532.9M471.9 536.8L465.5 536.8L465.5 522.2M471.9 536.8L478.8 536.8L478.8 537.5M466.3 508.1L465.5 508.1L465.5 522.2M451.6 571.4L464.4 571.4L464.4 559.7M451.6 571.4L450.0 571.4L450.0 571.7M464.4 559.7L466.9 559.7L466.9 539.8M466.9 539.8L450.0 539.8L450.0 539.3M483.3 595.7L452.1 595.7L452.1 571.6M483.3 595.7L483.3 586.5L450.0 586.5M452.1 571.6L451.6 571.6L451.6 571.4M471.9 536.8L466.9 536.8L466.9 539.8M479.3 558.4L464.4 558.4L464.4 559.7M465.5 522.2L465.5 528.5L450.0 528.5M483.9 596.1L483.9 595.7L483.3 595.7M542.0 589.5L542.0 580.0L529.8 580.0M523.1 584.2L524.0 584.2L524.0 582.1M524.0 582.1L524.0 580.0L529.8 580.0M547.8 560.8L547.8 560.3L543.7 560.3M543.7 560.3L543.7 566.2L537.5 566.2M529.8 580.0L529.8 566.2L537.5 566.2M554.9 520.5L554.9 524.7L560.4 524.7M554.9 520.5L554.9 513.9L558.4 513.9M560.4 524.7L577.5 524.7L577.5 517.7M558.4 513.9L571.5 513.9L571.5 511.0M571.5 511.0L571.5 517.7L577.5 517.7M543.7 523.5L548.4 523.5L548.4 534.8M543.7 523.5L554.9 523.5L554.9 520.5M548.4 534.8L567.0 534.8L567.0 545.0M566.8 536.1L566.8 524.7L560.4 524.7M535.0 514.2L538.7 514.2L538.7 522.0M538.7 522.0L538.7 523.5L543.7 523.5M555.7 503.6L555.7 513.9L558.4 513.9M580.6 519.5L577.5 519.5L577.5 517.7M572.0 498.5L571.5 498.5L571.5 511.0M538.7 522.0L527.8 522.0L527.8 535.4M514.1 517.9L520.6 517.9L520.6 530.4M527.8 535.4L520.6 535.4L520.6 530.4M496.2 529.2L496.2 532.0L502.8 532.0M520.6 530.4L502.8 530.4L502.8 532.0M495.8 545.6L505.4 545.6L505.4 550.8M505.4 550.8L505.4 542.2L514.3 542.2M502.8 532.0L502.8 542.2L514.3 542.2M567.3 463.0L567.3 467.2L552.3 467.2M567.3 463.0L569.9 463.0L569.9 458.6M569.9 458.6L569.9 454.2L544.2 454.2M552.3 467.2L552.3 459.4L540.3 459.4M540.3 459.4L540.3 454.2L544.2 454.2M571.0 483.6L571.0 463.0L567.3 463.0M553.6 483.3L552.3 483.3L552.3 467.2M540.0 459.4L540.3 459.4L540.3 459.4M572.4 455.8L557.9 455.8L557.9 439.9M572.4 455.8L570.5 455.8L570.5 457.9M570.5 457.9L570.5 450.0L546.7 450.0M557.9 439.9L557.9 443.5L552.1 443.5M552.1 443.5L547.2 443.5L547.2 448.8M547.2 448.8L547.2 450.0L546.7 450.0M584.8 452.8L584.8 455.8L572.4 455.8M558.4 437.9L557.9 437.9L557.9 439.9M569.9 458.6L569.9 457.9L570.5 457.9M544.2 454.2L546.7 454.2L546.7 450.0M538.6 430.6L538.6 443.5L552.1 443.5M535.6 435.7L547.2 435.7L547.2 448.8M527.4 538.0L527.4 542.6L520.3 542.6M527.4 538.0L527.4 553.2L539.8 553.2M539.8 553.2L539.8 554.2L540.1 554.2M540.1 554.2L518.6 554.2L518.6 554.4M518.6 554.4L520.3 554.4L520.3 542.6M527.8 535.4L527.8 538.0L527.4 538.0M514.3 542.2L520.3 542.2L520.3 542.6M548.4 534.8L539.8 534.8L539.8 553.2M543.7 560.3L543.7 554.2L540.1 554.2M537.5 566.2L537.5 559.3L516.4 559.3M516.2 558.2L516.4 558.2L516.4 559.3M516.2 558.2L518.6 558.2L518.6 554.4M505.4 550.8L505.4 553.5L506.7 553.5M516.2 558.2L506.7 558.2L506.7 553.5M513.0 574.5L514.9 574.5L514.9 563.5M513.0 574.5L491.8 574.5L491.8 575.4M514.9 563.5L502.1 563.5L502.1 561.3M502.1 561.3L502.1 572.7L491.2 572.7M491.8 575.4L491.8 574.5L491.3 574.5M491.2 572.7L491.3 572.7L491.3 574.5M524.0 582.1L513.0 582.1L513.0 574.5M516.4 559.3L516.4 563.5L514.9 563.5M489.8 587.1L489.8 575.4L491.8 575.4M506.7 553.5L502.1 553.5L502.1 561.3M488.4 565.6L488.4 572.7L491.2 572.7M452.1 571.6L452.1 574.5L491.3 574.5M505.0 672.9L482.1 698.1M436.4 610.7L413.6 635.8M425.1 600.4L402.3 625.6M394.5 596.6L413.2 613.6M414.3 612.4L421.7 619.2L423.7 617.0L427.6 620.4M462.5 634.3L439.6 659.5M451.3 624.2L428.5 649.4M437.0 640.0L448.1 650.1M492.0 661.2L469.2 686.3M479.1 649.5L456.3 674.6M447.5 650.7L464.2 665.9M464.2 665.9L477.1 677.6M484.4 669.6L497.3 681.3M542.3 706.8L519.4 732.0M525.7 691.8L517.1 701.3L518.6 702.6L504.3 718.3M494.8 684.1L515.5 703.0M512.1 679.4L507.6 684.4L506.1 683.1L500.5 689.3M514.9 703.7L531.5 718.7M560.7 723.6L537.8 748.8M534.5 715.4L552.9 732.2M547.5 738.1L556.0 745.9L554.6 747.4L566.9 758.5M572.9 734.7L559.7 749.3M556.5 746.3L546.9 757.0M406.4 583.4L581.4 742.4M383.6 608.6L558.6 767.6M571.9 743.3L571.7 736.3L574.0 727.8M587.5 723.4L581.0 725.0L574.0 727.8M567.3 746.6L560.9 742.2L557.1 736.2M574.0 727.8L569.1 725.2M557.1 736.2L556.0 729.0M556.0 729.0L563.0 725.5M563.0 725.5L569.1 725.2M430.5 615.0L440.3 613.9L452.3 615.1M419.4 601.5L437.4 598.0L457.6 597.0M452.3 615.1L458.9 612.1M458.9 612.1L459.5 603.9L457.6 597.0M465.8 586.5L461.1 592.7L457.6 597.0M557.1 736.2L553.4 738.3L548.9 742.4M562.0 689.0L561.3 698.2L561.0 705.0M562.0 689.0L569.4 693.5L577.6 696.8M561.0 705.0L564.7 706.2L570.9 705.9M580.0 703.3L576.3 705.6L570.9 705.9M568.8 673.5L564.9 676.3L560.0 680.0M560.0 680.0L559.7 684.5L562.0 689.0M559.9 705.5L561.0 705.0M559.9 705.5L562.2 714.5L563.0 725.5M569.1 725.2L569.3 715.7L570.9 705.9M556.4 680.4L548.0 674.5L538.0 666.1M556.4 680.4L548.1 686.2L542.1 693.8M542.1 693.8L537.9 685.8L531.9 676.9M531.9 676.9L535.6 673.0L538.0 666.1M565.8 665.6L553.2 665.3L538.0 662.9M556.4 680.4L560.0 680.0M538.0 666.1L538.0 662.9M532.9 728.5L544.6 728.0L554.6 728.2M529.7 725.7L532.9 719.9L535.2 715.9M535.2 715.9L541.8 711.3L546.8 705.1M554.6 728.2L553.2 717.1L550.5 706.3M550.5 706.3L546.8 705.1M556.0 729.0L554.6 728.2M559.9 705.5L554.8 705.6L550.5 706.3M542.1 693.8L542.1 693.8M542.1 693.8L543.0 700.5L546.8 705.1M461.7 653.2L473.3 653.4L484.7 654.3M484.7 654.3L480.0 662.5L475.0 669.4M502.2 658.2L506.8 666.2L512.1 672.2M502.2 658.2L517.0 653.2L529.3 648.8M512.1 672.2L522.8 664.0L535.7 654.2M529.3 648.8L535.5 651.3M535.5 651.3L535.7 654.2M514.8 628.4L515.4 626.3M514.8 628.4L523.5 637.6L529.3 648.8M538.0 662.9L537.5 659.6L535.7 654.2M500.1 657.4L499.6 668.2L496.5 681.2M500.1 657.4L499.4 657.0M499.4 657.0L491.3 670.4L485.6 680.9M496.5 681.2L489.9 680.1L485.6 680.9M503.9 685.2L509.0 680.9L513.6 677.0M503.9 685.2L501.0 682.3L496.5 681.2M513.6 677.0L512.1 672.2M502.2 658.2L500.1 657.4M491.4 649.0L489.3 650.8L484.7 654.3M491.4 649.0L496.2 651.7L499.4 657.0M484.7 681.2L485.6 680.9M465.0 616.6L466.0 616.8M465.0 616.6L458.2 627.0L451.6 640.2M466.0 616.8L466.7 623.1L468.5 630.6M468.5 630.6L463.8 635.5L457.9 640.6M457.9 640.6L452.5 642.0M451.6 640.2L451.4 640.6M452.3 615.1L450.6 629.1L451.6 640.2M458.9 612.1L465.0 616.6M491.4 649.0L490.9 643.2M490.9 643.2L475.5 643.2L457.9 640.6M480.4 609.1L472.3 597.5L465.8 586.5M480.4 609.1L486.6 608.7M486.6 608.7L489.8 606.5L494.5 606.5M514.8 628.4L501.8 635.3L491.6 642.1M515.4 626.3L504.6 617.0L496.0 609.5M491.6 642.1L494.9 625.8L496.0 609.5M490.9 643.2L491.0 642.7M491.6 642.1L491.0 642.7M494.5 606.5L496.0 609.5M477.4 630.9L481.2 634.5L486.8 637.0M477.4 630.9L473.3 623.6L470.7 616.1M477.1 612.4L470.7 616.1M477.1 612.4L481.2 624.2L486.6 635.9M486.6 635.9L486.8 637.0M468.5 630.6L473.3 630.9L477.4 630.9M491.0 642.7L486.8 637.0M466.0 616.8L470.7 616.1M480.4 609.1L477.1 612.4M486.6 608.7L486.3 623.2L486.6 635.9M531.9 676.9L528.6 677.2L523.0 679.5M513.6 677.0L515.8 678.0M523.0 679.5L515.8 678.0M503.9 685.2L502.2 690.6L502.7 698.4M501.4 701.3L502.7 698.4M535.2 715.9L531.3 708.9L524.5 699.2M512.0 710.4L517.4 706.2L524.5 699.2M516.1 690.6L519.4 692.8L524.5 694.9M516.1 690.6L512.3 694.7M512.3 694.7L518.8 697.1L525.2 697.1M524.5 694.9L525.4 697.0M525.4 697.0L525.2 697.1M523.0 679.5L522.4 686.6L524.5 694.9M515.8 678.0L516.3 683.0L516.1 690.6M502.7 698.4L506.7 696.4L512.3 694.7M524.5 699.2L525.2 697.1M542.1 693.8L534.9 696.2L525.4 697.0M349.3 598.0L330.0 598.0L330.0 581.3M364.6 598.0L366.0 598.0L366.0 590.1M352.6 575.3L334.5 575.3L334.5 571.6M352.6 575.3L352.6 587.0L365.7 587.0M334.5 571.6L334.5 573.2L330.0 573.2M365.7 587.0L366.0 587.0L366.0 590.1M339.1 535.5L337.5 535.5L337.5 545.2M339.1 535.5L339.1 541.2L330.0 541.2M337.5 545.2L333.6 545.2L333.6 544.7M330.0 543.0L333.6 543.0L333.6 544.7M334.5 571.6L334.5 555.9L342.3 555.9M342.3 555.9L337.5 555.9L337.5 545.2M330.0 549.3L330.0 544.7L333.6 544.7M408.0 578.1L408.0 574.0L404.7 574.0M408.0 578.1L408.0 598.0L414.5 598.0M404.7 574.0L392.2 574.0L392.2 577.3M397.3 598.0L397.3 594.3L393.9 594.3M393.9 594.3L393.9 580.7L389.1 580.7M392.2 577.3L389.1 577.3L389.1 580.7M366.0 590.1L366.0 594.3L393.9 594.3M365.7 587.0L365.7 578.7L375.7 578.7M375.7 578.7L389.1 578.7L389.1 580.7M339.1 535.5L339.1 525.0L343.7 525.0M404.7 569.1L404.7 569.1L404.7 574.0M404.7 569.1L404.7 556.8L399.3 556.8M385.3 555.7L385.3 577.3L392.2 577.3M385.3 555.7L385.3 554.4L394.8 554.4M394.8 554.4L399.3 554.4L399.3 556.8M404.7 569.1L417.2 569.1L417.2 564.3M408.0 578.1L408.0 570.6L420.7 570.6M420.7 570.6L420.7 564.3L417.2 564.3M408.7 556.2L417.6 556.2L417.6 562.9M408.7 556.2L408.7 555.5L403.5 555.5M399.3 556.8L399.3 555.5L403.5 555.5M417.2 564.3L417.6 564.3L417.6 562.9M352.6 575.3L352.6 563.9L361.4 563.9M375.7 578.7L378.6 578.7L378.6 561.8M361.4 563.9L378.6 563.9L378.6 561.8M385.3 555.7L383.5 555.7L383.5 555.4M377.6 525.0L377.3 525.0L377.3 547.0M392.1 525.0L392.1 535.6L401.0 535.6M401.0 535.6L394.8 535.6L394.8 554.4M377.3 547.0L377.3 555.4L383.5 555.4M378.6 561.8L378.6 555.4L383.5 555.4M342.3 555.9L342.3 553.3L345.6 553.3M350.9 525.0L353.2 525.0L353.2 538.9M345.6 553.3L353.2 553.3L353.2 538.9M401.0 535.6L407.7 535.6L407.7 535.6M423.7 528.0L407.7 528.0L407.7 535.6M403.5 555.5L412.2 555.5L412.2 546.8M407.7 535.6L412.2 535.6L412.2 546.8M456.3 572.2L448.5 572.2L448.5 563.3M456.3 572.2L480.0 572.2L480.0 563.0M448.5 563.3L448.5 553.6L445.7 553.6M445.7 553.6L480.0 553.6L480.0 551.3M422.9 571.3L422.9 569.1L425.8 569.1M422.9 571.3L422.9 598.0L430.7 598.0M425.8 569.1L425.8 568.4L433.3 568.4M433.3 568.4L433.3 598.0L441.1 598.0M420.7 570.6L420.7 571.3L422.9 571.3M456.3 572.2L456.3 598.0L443.5 598.0M448.5 563.3L434.3 563.3L434.3 566.5M434.3 566.5L434.3 568.4L433.3 568.4M408.7 556.2L420.9 556.2L420.9 553.4M417.6 562.9L417.6 561.1L419.3 561.1M419.3 561.1L420.9 561.1L420.9 553.4M412.2 546.8L412.2 548.4L424.7 548.4M420.9 553.4L424.7 553.4L424.7 548.4M434.3 566.5L434.3 558.6L431.1 558.6M433.2 542.9L431.9 542.9L431.9 544.5M433.2 542.9L440.2 542.9L440.2 543.5M445.7 553.6L440.2 553.6L440.2 543.5M431.1 558.6L431.9 558.6L431.9 544.5M433.2 542.9L433.2 528.0L423.7 528.0M431.9 544.5L431.9 548.4L424.7 548.4M371.4 547.7L371.4 559.1L360.8 559.1M371.4 547.7L361.6 547.7L361.6 546.0M361.6 546.0L361.6 554.6L357.5 554.6M360.8 559.1L357.5 559.1L357.5 554.6M361.4 563.9L360.8 563.9L360.8 559.1M377.3 547.0L371.4 547.0L371.4 547.7M353.2 538.9L353.2 546.0L361.6 546.0M345.6 553.3L345.6 554.6L357.5 554.6M446.9 534.1L446.9 543.0L441.1 543.0M446.9 534.1L480.0 534.1L480.0 527.1M441.1 543.0L480.0 543.0L480.0 544.5M440.2 543.5L440.2 543.0L441.1 543.0M425.4 565.7L425.4 561.8L421.2 561.8M425.4 565.7L425.4 561.2L427.7 561.2M427.7 561.2L427.7 561.8L421.2 561.8M425.8 569.1L425.8 565.7L425.4 565.7M419.3 561.1L419.3 561.8L421.2 561.8M431.1 558.6L431.1 561.2L427.7 561.2M600.0 609.5L585.5 609.5L585.5 601.3M600.0 619.1L600.0 623.0L584.0 623.0M584.0 623.0L585.5 623.0L585.5 601.3M585.0 600.0L585.5 600.0L585.5 601.3M579.6 600.0L564.4 600.0L564.4 618.3M584.0 623.0L578.6 623.0L578.6 626.2M564.4 618.3L564.4 621.3L567.5 621.3M578.6 626.2L578.6 621.3L567.5 621.3M578.6 626.2L578.6 639.2L581.5 639.2M564.4 618.3L564.4 614.8L558.1 614.8M551.4 600.0L551.4 611.4L553.3 611.4M558.1 614.8L558.1 611.4L553.3 611.4M567.5 621.3L561.2 621.3L561.2 634.5M581.5 639.2L581.5 658.7L570.0 658.7M561.2 634.5L561.2 658.7L570.0 658.7M569.4 660.0L569.4 658.7L570.0 658.7M496.3 634.0L496.3 621.2L475.0 621.2M475.0 621.2L475.0 615.5L482.0 615.5M519.7 600.0L518.2 600.0L518.2 616.6M553.3 611.4L553.3 624.5L533.9 624.5M533.9 624.5L533.9 616.6L518.2 616.6M558.1 614.8L558.1 635.3L550.9 635.3M561.2 634.5L556.6 634.5L556.6 639.2M550.9 635.3L556.6 635.3L556.6 639.2M556.6 639.2L556.6 660.0L548.9 660.0M501.1 660.0L501.1 637.6L501.7 637.6M496.3 634.0L496.3 634.6L500.8 634.6M501.7 637.6L501.7 634.6L500.8 634.6M534.0 633.9L534.0 638.6L518.4 638.6M534.0 633.9L536.7 633.9L536.7 641.2M537.8 648.3L537.8 641.2L536.7 641.2M537.8 648.3L519.2 648.3L519.2 647.6M518.4 638.6L516.2 638.6L516.2 642.3M516.2 642.3L516.2 647.2L516.7 647.2M519.2 647.6L516.7 647.6L516.7 647.2M533.9 624.5L534.0 624.5L534.0 633.9M550.9 635.3L536.7 635.3L536.7 641.2M543.4 660.0L537.8 660.0L537.8 648.3M523.6 660.0L523.6 647.6L519.2 647.6M508.1 625.0L518.4 625.0L518.4 638.6M508.1 625.0L508.1 634.6L500.8 634.6M501.7 637.6L516.2 637.6L516.2 642.3M505.3 660.0L505.3 647.2L516.7 647.2M512.1 619.3L512.1 622.4L509.1 622.4M512.1 619.3L512.1 603.3L496.4 603.3M509.1 622.4L509.1 614.8L483.9 614.8M496.4 603.3L483.9 603.3L483.9 614.8M518.2 616.6L512.1 616.6L512.1 619.3M508.1 625.0L508.1 622.4L509.1 622.4M497.0 600.0L497.0 603.3L496.4 603.3M482.0 615.5L482.0 614.8L483.9 614.8M869.0 404.0L869.2 404.0L869.2 405.9M927.1 446.9L892.6 446.9L892.6 437.7M892.6 437.7L869.2 437.7L869.2 405.9M824.9 501.2L829.8 501.2L829.8 442.4M824.9 501.2L824.9 493.5L852.1 493.5M829.8 442.4L829.8 431.9L850.9 431.9M850.9 431.9L852.1 431.9L852.1 493.5M892.6 437.7L878.8 437.7L878.8 490.8M869.2 405.9L869.2 431.9L850.9 431.9M852.1 493.5L860.4 493.5L860.4 494.4M860.4 494.4L860.4 490.8L878.8 490.8M846.2 560.0L819.9 560.0L819.9 504.8M824.9 501.2L824.9 502.9L821.6 502.9M860.4 494.4L860.4 535.3L870.1 535.3M819.9 504.8L819.9 502.9L821.6 502.9M861.8 560.0L861.8 535.3L870.1 535.3M693.8 491.3L693.8 462.5L688.3 462.5M693.8 491.3L693.8 496.7L650.0 496.7M650.0 470.9L650.0 461.8L683.8 461.8M683.8 461.8L688.3 461.8L688.3 462.5M700.8 442.4L715.5 442.4L715.5 449.2M700.8 442.4L700.8 462.5L688.3 462.5M715.5 449.2L726.4 449.2L726.4 486.2M726.4 486.2L698.7 486.2L698.7 495.9M698.7 495.9L698.7 491.3L693.8 491.3M698.7 495.9L698.7 514.9L699.7 514.9M691.3 541.9L699.7 541.9L699.7 514.9M691.3 541.9L681.5 541.9L681.5 536.8M681.5 536.8L681.5 502.4L650.0 502.4M650.0 532.8L681.5 532.8L681.5 536.8M695.9 404.0L695.9 442.4L700.8 442.4M927.1 446.9L927.1 506.1L929.2 506.1M878.8 490.8L913.7 490.8L913.7 507.1M929.2 506.1L913.7 506.1L913.7 507.1M736.1 486.2L736.1 466.9L756.1 466.9M736.1 486.2L736.1 505.1L744.2 505.1M756.1 466.9L756.1 467.9L762.4 467.9M762.4 467.9L762.4 510.6L797.9 510.6M744.2 505.1L744.2 510.6L797.9 510.6M726.4 486.2L736.1 486.2L736.1 486.2M699.7 514.9L739.6 514.9L739.6 520.9M744.2 505.1L744.2 520.9L739.6 520.9M721.4 560.0L721.4 529.0L742.6 529.0M694.9 560.0L694.9 541.9L691.3 541.9M739.6 520.9L739.6 529.0L742.6 529.0M800.2 451.1L800.2 453.0L780.7 453.0M800.2 451.1L806.9 451.1L806.9 441.1M780.7 453.0L780.7 423.7L773.7 423.7M806.9 441.1L806.9 404.0L797.6 404.0M784.0 404.0L784.0 416.9L774.8 416.9M774.8 416.9L774.8 423.7L773.7 423.7M819.9 504.8L810.1 504.8L810.1 507.9M821.6 502.9L821.6 451.1L800.2 451.1M762.4 467.9L780.7 467.9L780.7 453.0M810.1 507.9L810.1 510.8L798.1 510.8M797.9 510.6L798.1 510.6L798.1 510.8M829.8 442.4L829.8 441.1L806.9 441.1M756.1 466.9L746.8 466.9L746.8 451.2M746.8 451.2L746.8 423.7L773.7 423.7M876.5 533.9L896.5 533.9L896.5 544.6M876.5 533.9L876.5 516.8L907.7 516.8M907.7 516.8L907.7 544.6L896.5 544.6M870.4 560.0L870.4 544.8L896.4 544.8M870.1 535.3L870.1 533.9L876.5 533.9M896.4 544.8L896.5 544.8L896.5 544.6M913.7 507.1L907.7 507.1L907.7 516.8M810.1 507.9L814.1 507.9L814.1 560.0M794.0 517.3L798.1 517.3L798.1 510.8M794.0 517.3L794.0 560.0L801.5 560.0M726.3 449.5L731.3 449.5L731.3 413.5M726.3 449.5L726.3 450.1L745.6 450.1M745.6 450.1L741.4 450.1L741.4 423.8M731.3 413.5L731.3 423.8L741.4 423.8M722.0 404.0L731.3 404.0L731.3 413.5M715.5 449.2L726.3 449.2L726.3 449.5M746.8 451.2L746.8 450.1L745.6 450.1M774.8 416.9L741.4 416.9L741.4 423.8M780.7 529.3L780.7 535.4L769.0 535.4M780.7 529.3L780.7 539.8L781.8 539.8M781.8 539.8L781.9 539.8L781.9 560.0M769.0 535.4L759.5 535.4L759.5 560.0M742.6 529.0L769.0 529.0L769.0 535.4M794.0 517.3L794.0 529.3L780.7 529.3M790.6 560.0L781.8 560.0L781.8 539.8" fill="none" stroke="#2a2626" stroke-width="1" stroke-linejoin="round"/><circle cx="331.1" cy="492.1" r="3.5" fill="none" stroke="#2a2626" stroke-width="1"/><circle cx="356.3" cy="511.8" r="8" fill="none" stroke="#2a2626" stroke-width="1"/><circle cx="370.6" cy="521.7" r="10" fill="none" stroke="#2a2626" stroke-width="1"/><circle cx="395.8" cy="445.3" r="6" fill="none" stroke="#2a2626" stroke-width="1"/><polygon points="337.0,400.0 427.0,400.0 427.0,409.0 500.0,410.0 500.0,418.0 620.0,418.5 645.0,419.0 645.0,402.0 954.0,402.0 1267.0,402.0 1439.0,401.5 1439.0,375.5 1740.0,370.5 1870.0,368.0 1869.9,368.9 1869.8,370.8 1869.6,373.6 1869.4,377.4 1869.3,380.9 1869.4,384.3 1869.8,387.5 1870.2,390.5 1870.3,393.5 1869.9,396.5 1869.1,399.5 1867.9,402.5 1866.4,404.9 1864.6,406.8 1862.6,408.1 1860.4,408.9 1858.9,409.9 1858.1,411.1 1858.1,412.6 1858.9,414.4 1859.1,415.9 1858.9,417.3 1858.1,418.5 1856.9,419.5 1855.0,421.2 1852.5,423.8 1849.4,427.0 1845.6,431.0 1842.3,434.3 1839.4,436.9 1837.0,438.9 1835.0,440.1 1832.9,442.1 1830.8,444.7 1828.6,448.0 1826.4,452.0 1825.1,455.3 1824.7,457.9 1825.2,459.9 1826.8,461.1 1828.3,462.6 1829.9,464.4 1831.6,466.4 1833.4,468.6 1834.2,470.5 1834.2,472.0 1833.4,473.1 1831.6,473.9 1830.9,475.2 1831.1,477.2 1832.4,479.9 1834.6,483.1 1836.0,486.2 1836.5,489.2 1836.1,492.1 1834.9,494.9 1833.5,497.1 1832.0,498.7 1830.4,499.8 1828.6,500.2 1827.6,501.9 1827.2,504.6 1827.5,508.5 1828.5,513.5 1829.1,517.6 1829.4,520.7 1829.2,522.9 1828.8,524.1 1829.1,526.8 1830.2,530.9 1832.1,536.5 1834.9,543.5 1836.8,549.9 1837.9,555.6 1838.2,560.8 1837.8,565.2 1837.8,569.4 1838.4,573.1 1839.6,576.5 1841.4,579.5 1842.8,582.1 1843.9,584.4 1844.8,586.2 1845.2,587.8 1845.2,589.3 1844.8,590.9 1843.8,592.6 1842.2,594.4 1840.4,596.0 1838.3,597.5 1835.9,598.9 1833.1,600.1 1831.1,601.6 1829.7,603.4 1829.0,605.4 1829.0,607.6 1829.4,609.6 1830.3,611.4 1831.6,612.9 1833.4,614.1 1834.1,615.4 1833.9,616.8 1832.6,618.2 1830.4,619.8 1829.0,621.3 1828.5,622.9 1828.9,624.6 1830.1,626.4 1830.9,628.2 1831.1,630.1 1830.9,632.0 1830.1,634.0 1829.8,636.0 1829.8,638.0 1830.1,640.0 1830.9,642.0 1830.9,644.3 1830.3,646.9 1829.0,649.9 1827.0,653.1 1825.4,656.1 1824.1,658.9 1823.2,661.4 1822.8,663.6 1823.0,666.1 1824.0,668.9 1825.8,671.9 1828.2,675.1 1829.1,678.4 1828.2,681.8 1825.6,685.2 1821.4,688.8 1818.1,691.9 1815.7,694.8 1814.2,697.4 1813.8,699.6 1812.8,701.6 1811.2,703.4 1809.2,704.9 1806.8,706.1 1804.3,707.8 1801.9,709.9 1799.6,712.5 1797.4,715.5 1795.1,718.9 1792.7,722.8 1790.2,727.1 1787.8,731.9 1785.8,736.2 1784.4,740.1 1783.6,743.5 1783.4,746.5 1783.2,748.8 1783.1,750.2 1783.0,751.0 1681.0,753.0 1681.0,755.0 1620.0,755.5 1260.0,760.0 880.0,761.0 592.0,760.0 592.0,757.0 489.0,756.0 489.0,744.0 470.0,738.0 425.0,720.0 426.0,712.0 357.0,711.0 357.0,707.0 360.0,707.0 360.0,702.0 357.0,702.0 357.0,694.0 405.0,622.0 374.0,596.0 346.0,590.0 346.0,562.0 342.0,562.0 324.0,555.0 285.0,501.0 279.0,501.0 278.0,484.0 288.0,484.0 288.0,463.0 311.0,463.0 311.0,434.0 337.0,426.0" fill="none" stroke="#2a2626" stroke-width="1"/></svg>
<div style="position:absolute;left:0px;top:998px;width:1912px;height:29px;background:#edeae6"></div>
<svg style="position:absolute;left:0;top:995" width="1914" height="32" viewBox="0 995 1914 32"><rect x="2.5" y="1001.5" width="247" height="21.5" rx="3" fill="#fff" stroke="#b6b1ab" stroke-width="1"/><circle cx="16" cy="1011" r="4" fill="none" stroke="#777" stroke-width="1.3"/><path d="M19 1014 l3.5 3.5" stroke="#777" stroke-width="1.5"/><rect x="1142.5" y="1001.5" width="91.5" height="21" rx="3" fill="#fff" stroke="#b6b1ab" stroke-width="1"/><g transform="rotate(-35 1246.5 1012)"><rect x="1242" y="1004" width="9" height="15" rx="4.5" fill="#fff" stroke="#333" stroke-width="1.4"/><path d="M1244 1006 v5 M1246.5 1006 v5 M1249 1006 v5" stroke="#333" stroke-width="1.1"/></g><circle cx="1248.5" cy="1015.5" r="2" fill="#fff" stroke="#333" stroke-width="0.9"/><path d="M1251 1007 l3 -2.5" stroke="#555" stroke-width="0.8" stroke-dasharray="1.2 1"/><rect x="1296.5" y="1001.5" width="94.5" height="21.5" rx="3" fill="#fff" stroke="#b6b1ab" stroke-width="1"/><path d="M1371.5 1002 v20.5" stroke="#c9c4be" stroke-width="1"/><rect x="1372" y="1002" width="18.5" height="20.5" fill="#f8f7f5"/><path d="M1376.5 1011 h9 l-4.5 4.5 z" fill="#555"/><path d="M1406.2 1011 v-2.5 a3.8 3.8 0 0 1 7.6 0 v2.5" fill="none" stroke="#6b6b6b" stroke-width="1.5"/><rect x="1404" y="1010.5" width="12" height="9.3" rx="1.5" fill="#6b6b6b"/><rect x="1471.5" y="1001.5" width="93" height="21.5" rx="3" fill="#fff" stroke="#b6b1ab" stroke-width="1"/><path d="M1551.5 1002 v20.5" stroke="#c9c4be" stroke-width="1"/><rect x="1552" y="1002" width="12" height="20.5" fill="#f8f7f5"/><path d="M1553.5 1009.5 h8 l-4 -4.5 z M1553.5 1014.5 h8 l-4 4.5 z" fill="#555"/><rect x="1622.5" y="1001.5" width="90" height="21.5" rx="3" fill="#fff" stroke="#b6b1ab" stroke-width="1"/><path d="M1698.5 1002 v20.5" stroke="#c9c4be" stroke-width="1"/><rect x="1699" y="1002" width="13" height="20.5" fill="#f8f7f5"/><path d="M1701 1009.5 h8 l-4 -4.5 z M1701 1014.5 h8 l-4 4.5 z" fill="#555"/><rect x="1719.5" y="1005.5" width="13" height="13.5" fill="#fff" stroke="#c9bfb0" stroke-width="1"/><path d="M1722.3 1011.8 l2.6 4.2 l5 -8.3" fill="none" stroke="#000" stroke-width="1.6"/><path d="M1792 1005.5 h8 l4 5 l-3 8 h-10 l-3 -8 z" fill="#d9d9d9" stroke="#7a7a7a" stroke-width="0.9"/><path d="M1789 1010.5 h14 M1790 1014.5 h12 M1796 1005.5 v13 M1793 1006 l-1.5 12.5 M1799 1006 l1.5 12.5" stroke="#7a7a7a" stroke-width="0.7"/><path d="M1783 1018.5 h96" stroke="#111" stroke-width="1"/><ellipse cx="1897" cy="1012.5" rx="8" ry="6.5" fill="#6b6b6b"/><path d="M1898 1017 l5 3.5 l-1 -5 z" fill="#6b6b6b"/><circle cx="1893.2" cy="1012.4" r="1.3" fill="#fff"/><circle cx="1897" cy="1012.4" r="1.3" fill="#fff"/><circle cx="1900.8" cy="1012.4" r="1.3" fill="#fff"/></svg>
<div class="t" style="left:31px;top:1004.5px;font-size:13.8px;color:#7b7b7b;font-weight:normal;">Type to locate (Ctrl+K)</div>
<div class="t" style="left:1089.5px;top:1007.5px;font-size:10px;color:#2a2a2a;font-weight:normal;">Coordinate</div>
<div class="t" style="left:1268px;top:1007.5px;font-size:10px;color:#2a2a2a;font-weight:normal;">Scale</div>
<div class="t" style="left:1425.5px;top:1007.5px;font-size:10px;color:#2a2a2a;font-weight:normal;">Magnifier</div>
<div class="t" style="left:1575.5px;top:1007.5px;font-size:10px;color:#2a2a2a;font-weight:normal;">Rotation</div>
<div class="t" style="left:1738.5px;top:1007.5px;font-size:10px;color:#2a2a2a;font-weight:normal;">Render</div>
<div class="t" style="left:1146.5px;top:1007.5px;font-size:10px;color:#222;font-weight:normal;">6944949,2044183</div>
<div class="t" style="left:1300.5px;top:1007.5px;font-size:10px;color:#222;font-weight:normal;">1:710626</div>
<div class="t" style="left:1475.5px;top:1007.5px;font-size:10px;color:#222;font-weight:normal;">100%</div>
<div class="t" style="left:1627px;top:1007.5px;font-size:10px;color:#222;font-weight:normal;">0.0 °</div>
<div class="t" style="left:1808px;top:1006.8px;font-size:10px;color:#111;font-weight:normal;letter-spacing:-0.2px">USER:100027</div>
</body></html>
